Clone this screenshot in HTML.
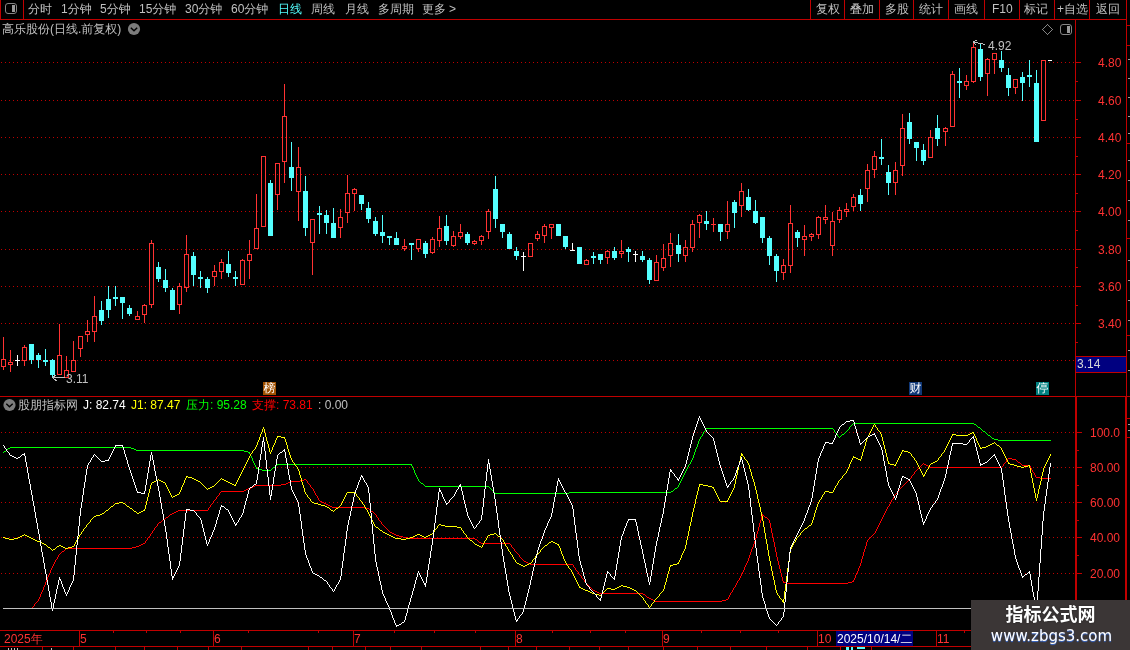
<!DOCTYPE html>
<html><head><meta charset="utf-8"><title>chart</title>
<style>
html,body{margin:0;padding:0;background:#000;}
#w{position:relative;width:1130px;height:650px;overflow:hidden;background:#000;font-family:"Liberation Sans","WenQuanYi Zen Hei",sans-serif;}
#t{position:absolute;left:0;top:0;width:1130px;height:650px;will-change:transform;}
#w span{position:absolute;white-space:nowrap;line-height:14px;font-size:12px;}
svg{position:absolute;left:0;top:0;}
</style></head><body><div id="w">
<svg width="1130" height="650" viewBox="0 0 1130 650" shape-rendering="crispEdges">
<line x1="1" y1="62.5" x2="1075" y2="62.5" stroke="#C00000" stroke-width="1" stroke-dasharray="1 3"/>
<line x1="1" y1="100.5" x2="1075" y2="100.5" stroke="#C00000" stroke-width="1" stroke-dasharray="1 3"/>
<line x1="1" y1="137.5" x2="1075" y2="137.5" stroke="#C00000" stroke-width="1" stroke-dasharray="1 3"/>
<line x1="1" y1="174.5" x2="1075" y2="174.5" stroke="#C00000" stroke-width="1" stroke-dasharray="1 3"/>
<line x1="1" y1="211.5" x2="1075" y2="211.5" stroke="#C00000" stroke-width="1" stroke-dasharray="1 3"/>
<line x1="1" y1="249.5" x2="1075" y2="249.5" stroke="#C00000" stroke-width="1" stroke-dasharray="1 3"/>
<line x1="1" y1="286.5" x2="1075" y2="286.5" stroke="#C00000" stroke-width="1" stroke-dasharray="1 3"/>
<line x1="1" y1="323.5" x2="1075" y2="323.5" stroke="#C00000" stroke-width="1" stroke-dasharray="1 3"/>
<line x1="1" y1="360.5" x2="1075" y2="360.5" stroke="#C00000" stroke-width="1" stroke-dasharray="1 3"/>
<line x1="1" y1="432.5" x2="1075" y2="432.5" stroke="#C00000" stroke-width="1" stroke-dasharray="1 3"/>
<line x1="1" y1="467.5" x2="1075" y2="467.5" stroke="#C00000" stroke-width="1" stroke-dasharray="1 3"/>
<line x1="1" y1="502.5" x2="1075" y2="502.5" stroke="#C00000" stroke-width="1" stroke-dasharray="1 3"/>
<line x1="1" y1="537.5" x2="1075" y2="537.5" stroke="#C00000" stroke-width="1" stroke-dasharray="1 3"/>
<line x1="1" y1="573.5" x2="1075" y2="573.5" stroke="#C00000" stroke-width="1" stroke-dasharray="1 3"/>
<rect x="0" y="19" width="1127" height="1" fill="#C00000"/>
<rect x="0" y="0" width="1" height="20" fill="#C00000"/>
<rect x="23" y="0" width="1" height="20" fill="#C00000"/>
<rect x="810" y="0" width="1" height="19" fill="#C00000"/>
<rect x="844" y="0" width="1" height="19" fill="#C00000"/>
<rect x="879" y="0" width="1" height="19" fill="#C00000"/>
<rect x="913" y="0" width="1" height="19" fill="#C00000"/>
<rect x="948" y="0" width="1" height="19" fill="#C00000"/>
<rect x="984" y="0" width="1" height="19" fill="#C00000"/>
<rect x="1019" y="0" width="1" height="19" fill="#C00000"/>
<rect x="1054" y="0" width="1" height="19" fill="#C00000"/>
<rect x="1089" y="0" width="1" height="19" fill="#C00000"/>
<rect x="1126" y="0" width="1" height="397" fill="#C00000"/>
<rect x="1125" y="397" width="2" height="253" fill="#C00000"/>
<rect x="1127" y="25" width="3" height="1" fill="#C00000"/>
<rect x="1127" y="45" width="3" height="1" fill="#C00000"/>
<rect x="1127" y="143" width="3" height="1" fill="#C00000"/>
<rect x="1127" y="238" width="3" height="1" fill="#C00000"/>
<rect x="1127" y="335" width="3" height="1" fill="#C00000"/>
<rect x="1127" y="418" width="3" height="1" fill="#C00000"/>
<rect x="1127" y="437" width="3" height="1" fill="#C00000"/>
<rect x="1075" y="20" width="1" height="377" fill="#C00000"/>
<rect x="1075" y="397" width="2" height="234" fill="#C00000"/>
<rect x="0" y="396" width="1130" height="1" fill="#C00000"/>
<rect x="0" y="630" width="1076" height="1" fill="#C00000"/>
<rect x="0" y="646" width="1076" height="1" fill="#C00000"/>
<rect x="1076" y="62" width="5" height="1" fill="#C00000"/>
<rect x="1076" y="100" width="5" height="1" fill="#C00000"/>
<rect x="1076" y="137" width="5" height="1" fill="#C00000"/>
<rect x="1076" y="174" width="5" height="1" fill="#C00000"/>
<rect x="1076" y="211" width="5" height="1" fill="#C00000"/>
<rect x="1076" y="249" width="5" height="1" fill="#C00000"/>
<rect x="1076" y="286" width="5" height="1" fill="#C00000"/>
<rect x="1076" y="323" width="5" height="1" fill="#C00000"/>
<rect x="1076" y="360" width="5" height="1" fill="#C00000"/>
<rect x="1076" y="81" width="2" height="1" fill="#C00000"/>
<rect x="1076" y="119" width="2" height="1" fill="#C00000"/>
<rect x="1076" y="156" width="2" height="1" fill="#C00000"/>
<rect x="1076" y="193" width="2" height="1" fill="#C00000"/>
<rect x="1076" y="230" width="2" height="1" fill="#C00000"/>
<rect x="1076" y="267" width="2" height="1" fill="#C00000"/>
<rect x="1076" y="305" width="2" height="1" fill="#C00000"/>
<rect x="1076" y="342" width="2" height="1" fill="#C00000"/>
<rect x="1077" y="432" width="5" height="1" fill="#C00000"/>
<rect x="1077" y="467" width="5" height="1" fill="#C00000"/>
<rect x="1077" y="502" width="5" height="1" fill="#C00000"/>
<rect x="1077" y="537" width="5" height="1" fill="#C00000"/>
<rect x="1077" y="573" width="5" height="1" fill="#C00000"/>
<rect x="1077" y="450" width="2" height="1" fill="#C00000"/>
<rect x="1077" y="485" width="2" height="1" fill="#C00000"/>
<rect x="1077" y="520" width="2" height="1" fill="#C00000"/>
<rect x="1077" y="555" width="2" height="1" fill="#C00000"/>
<rect x="79" y="630" width="1" height="17" fill="#C00000"/>
<rect x="213" y="630" width="1" height="17" fill="#C00000"/>
<rect x="353" y="630" width="1" height="17" fill="#C00000"/>
<rect x="515" y="630" width="1" height="17" fill="#C00000"/>
<rect x="662" y="630" width="1" height="17" fill="#C00000"/>
<rect x="817" y="630" width="1" height="17" fill="#C00000"/>
<rect x="936" y="630" width="1" height="17" fill="#C00000"/>
<rect x="113" y="630" width="1" height="3" fill="#C00000"/>
<rect x="146" y="630" width="1" height="3" fill="#C00000"/>
<rect x="180" y="630" width="1" height="3" fill="#C00000"/>
<rect x="248" y="630" width="1" height="3" fill="#C00000"/>
<rect x="318" y="630" width="1" height="3" fill="#C00000"/>
<rect x="394" y="630" width="1" height="3" fill="#C00000"/>
<rect x="434" y="630" width="1" height="3" fill="#C00000"/>
<rect x="475" y="630" width="1" height="3" fill="#C00000"/>
<rect x="552" y="630" width="1" height="3" fill="#C00000"/>
<rect x="590" y="630" width="1" height="3" fill="#C00000"/>
<rect x="625" y="630" width="1" height="3" fill="#C00000"/>
<rect x="701" y="630" width="1" height="3" fill="#C00000"/>
<rect x="740" y="630" width="1" height="3" fill="#C00000"/>
<rect x="778" y="630" width="1" height="3" fill="#C00000"/>
<rect x="964" y="630" width="1" height="3" fill="#C00000"/>
<rect x="42" y="647" width="1" height="3" fill="#C00000"/>
<rect x="73" y="647" width="1" height="3" fill="#C00000"/>
<rect x="115" y="647" width="1" height="3" fill="#C00000"/>
<rect x="144" y="647" width="1" height="3" fill="#C00000"/>
<rect x="177" y="647" width="1" height="3" fill="#C00000"/>
<rect x="208" y="647" width="1" height="3" fill="#C00000"/>
<rect x="241" y="647" width="1" height="3" fill="#C00000"/>
<rect x="308" y="647" width="1" height="3" fill="#C00000"/>
<rect x="332" y="647" width="1" height="3" fill="#C00000"/>
<rect x="365" y="647" width="1" height="3" fill="#C00000"/>
<rect x="390" y="647" width="1" height="3" fill="#C00000"/>
<rect x="421" y="647" width="1" height="3" fill="#C00000"/>
<rect x="480" y="647" width="1" height="3" fill="#C00000"/>
<rect x="508" y="647" width="1" height="3" fill="#C00000"/>
<rect x="536" y="647" width="1" height="3" fill="#C00000"/>
<rect x="569" y="647" width="1" height="3" fill="#C00000"/>
<rect x="599" y="647" width="1" height="3" fill="#C00000"/>
<rect x="628" y="647" width="1" height="3" fill="#C00000"/>
<rect x="663" y="647" width="1" height="3" fill="#C00000"/>
<rect x="697" y="647" width="1" height="3" fill="#C00000"/>
<rect x="730" y="647" width="1" height="3" fill="#C00000"/>
<rect x="766" y="647" width="1" height="3" fill="#C00000"/>
<rect x="807" y="647" width="1" height="3" fill="#C00000"/>
<rect x="840" y="647" width="1" height="3" fill="#C00000"/>
<rect x="871" y="647" width="1" height="3" fill="#C00000"/>
<rect x="1128" y="59" width="2" height="1" fill="#A0A0A0"/>
<rect x="1128" y="78" width="2" height="1" fill="#A0A0A0"/>
<rect x="1128" y="97" width="2" height="1" fill="#A0A0A0"/>
<rect x="1128" y="116" width="2" height="1" fill="#A0A0A0"/>
<rect x="1128" y="133" width="2" height="1" fill="#A0A0A0"/>
<rect x="1128" y="160" width="2" height="1" fill="#A0A0A0"/>
<rect x="1128" y="180" width="2" height="1" fill="#A0A0A0"/>
<rect x="1128" y="200" width="2" height="1" fill="#A0A0A0"/>
<rect x="1128" y="220" width="2" height="1" fill="#A0A0A0"/>
<rect x="1128" y="260" width="2" height="1" fill="#A0A0A0"/>
<rect x="1128" y="280" width="2" height="1" fill="#A0A0A0"/>
<rect x="1128" y="300" width="2" height="1" fill="#A0A0A0"/>
<rect x="1128" y="320" width="2" height="1" fill="#A0A0A0"/>
<rect x="1128" y="350" width="2" height="1" fill="#A0A0A0"/>
<rect x="1128" y="370" width="2" height="1" fill="#A0A0A0"/>
<rect x="1128" y="424" width="2" height="1" fill="#A0A0A0"/>
<rect x="1128" y="430" width="2" height="1" fill="#A0A0A0"/>
<rect x="8" y="648" width="1" height="2" fill="#C0C0C0"/>
<rect x="11" y="648" width="1" height="2" fill="#C0C0C0"/>
<rect x="14" y="648" width="1" height="2" fill="#C0C0C0"/>
<rect x="17" y="648" width="1" height="2" fill="#C0C0C0"/>
<rect x="51" y="648" width="1" height="2" fill="#C0C0C0"/>
<rect x="846" y="647" width="3" height="3" fill="#54FFFF"/>
<rect x="851" y="647" width="2" height="3" fill="#54FFFF"/>
<rect x="857" y="647" width="8" height="2" fill="#54FFFF"/>
<rect x="3" y="337" width="1" height="22" fill="#FF3232"/>
<rect x="3" y="367" width="1" height="3" fill="#FF3232"/>
<rect x="1" y="359" width="5" height="1" fill="#FF3232"/>
<rect x="1" y="366" width="5" height="1" fill="#FF3232"/>
<rect x="1" y="359" width="1" height="8" fill="#FF3232"/>
<rect x="5" y="359" width="1" height="8" fill="#FF3232"/>
<rect x="10" y="350" width="1" height="12" fill="#FF3232"/>
<rect x="10" y="365" width="1" height="7" fill="#FF3232"/>
<rect x="8" y="362" width="5" height="1" fill="#FF3232"/>
<rect x="8" y="364" width="5" height="1" fill="#FF3232"/>
<rect x="8" y="362" width="1" height="3" fill="#FF3232"/>
<rect x="12" y="362" width="1" height="3" fill="#FF3232"/>
<rect x="17" y="355" width="1" height="11" fill="#FFFFFF"/>
<rect x="15" y="360" width="5" height="1" fill="#FFFFFF"/>
<rect x="24" y="345" width="1" height="2" fill="#FF3232"/>
<rect x="24" y="361" width="1" height="5" fill="#FF3232"/>
<rect x="22" y="347" width="5" height="1" fill="#FF3232"/>
<rect x="22" y="360" width="5" height="1" fill="#FF3232"/>
<rect x="22" y="347" width="1" height="14" fill="#FF3232"/>
<rect x="26" y="347" width="1" height="14" fill="#FF3232"/>
<rect x="31" y="344" width="1" height="20" fill="#54FFFF"/>
<rect x="29" y="344" width="5" height="16" fill="#54FFFF"/>
<rect x="38" y="353" width="1" height="15" fill="#54FFFF"/>
<rect x="36" y="355" width="5" height="5" fill="#54FFFF"/>
<rect x="45" y="349" width="1" height="17" fill="#54FFFF"/>
<rect x="43" y="360" width="5" height="2" fill="#54FFFF"/>
<rect x="52" y="359" width="1" height="18" fill="#54FFFF"/>
<rect x="50" y="360" width="5" height="15" fill="#54FFFF"/>
<rect x="59" y="324" width="1" height="31" fill="#FF3232"/>
<rect x="57" y="355" width="5" height="1" fill="#FF3232"/>
<rect x="57" y="374" width="5" height="1" fill="#FF3232"/>
<rect x="57" y="355" width="1" height="20" fill="#FF3232"/>
<rect x="61" y="355" width="1" height="20" fill="#FF3232"/>
<rect x="66" y="356" width="1" height="14" fill="#FF3232"/>
<rect x="64" y="370" width="5" height="1" fill="#FF3232"/>
<rect x="64" y="377" width="5" height="1" fill="#FF3232"/>
<rect x="64" y="370" width="1" height="8" fill="#FF3232"/>
<rect x="68" y="370" width="1" height="8" fill="#FF3232"/>
<rect x="73" y="341" width="1" height="19" fill="#FF3232"/>
<rect x="71" y="360" width="5" height="1" fill="#FF3232"/>
<rect x="71" y="371" width="5" height="1" fill="#FF3232"/>
<rect x="71" y="360" width="1" height="12" fill="#FF3232"/>
<rect x="75" y="360" width="1" height="12" fill="#FF3232"/>
<rect x="80" y="349" width="1" height="8" fill="#FF3232"/>
<rect x="78" y="336" width="5" height="1" fill="#FF3232"/>
<rect x="78" y="348" width="5" height="1" fill="#FF3232"/>
<rect x="78" y="336" width="1" height="13" fill="#FF3232"/>
<rect x="82" y="336" width="1" height="13" fill="#FF3232"/>
<rect x="87" y="320" width="1" height="11" fill="#FF3232"/>
<rect x="87" y="335" width="1" height="7" fill="#FF3232"/>
<rect x="85" y="331" width="5" height="1" fill="#FF3232"/>
<rect x="85" y="334" width="5" height="1" fill="#FF3232"/>
<rect x="85" y="331" width="1" height="4" fill="#FF3232"/>
<rect x="89" y="331" width="1" height="4" fill="#FF3232"/>
<rect x="94" y="296" width="1" height="20" fill="#FF3232"/>
<rect x="94" y="332" width="1" height="10" fill="#FF3232"/>
<rect x="92" y="316" width="5" height="1" fill="#FF3232"/>
<rect x="92" y="331" width="5" height="1" fill="#FF3232"/>
<rect x="92" y="316" width="1" height="16" fill="#FF3232"/>
<rect x="96" y="316" width="1" height="16" fill="#FF3232"/>
<rect x="101" y="301" width="1" height="24" fill="#54FFFF"/>
<rect x="99" y="310" width="5" height="11" fill="#54FFFF"/>
<rect x="108" y="286" width="1" height="32" fill="#54FFFF"/>
<rect x="106" y="299" width="5" height="11" fill="#54FFFF"/>
<rect x="115" y="286" width="1" height="20" fill="#54FFFF"/>
<rect x="113" y="297" width="5" height="2" fill="#54FFFF"/>
<rect x="122" y="297" width="1" height="22" fill="#54FFFF"/>
<rect x="120" y="297" width="5" height="6" fill="#54FFFF"/>
<rect x="129" y="305" width="1" height="11" fill="#54FFFF"/>
<rect x="127" y="308" width="5" height="6" fill="#54FFFF"/>
<rect x="137" y="311" width="1" height="5" fill="#FF3232"/>
<rect x="135" y="316" width="5" height="1" fill="#FF3232"/>
<rect x="135" y="319" width="5" height="1" fill="#FF3232"/>
<rect x="135" y="316" width="1" height="4" fill="#FF3232"/>
<rect x="139" y="316" width="1" height="4" fill="#FF3232"/>
<rect x="144" y="304" width="1" height="1" fill="#FF3232"/>
<rect x="144" y="315" width="1" height="8" fill="#FF3232"/>
<rect x="142" y="305" width="5" height="1" fill="#FF3232"/>
<rect x="142" y="314" width="5" height="1" fill="#FF3232"/>
<rect x="142" y="305" width="1" height="10" fill="#FF3232"/>
<rect x="146" y="305" width="1" height="10" fill="#FF3232"/>
<rect x="151" y="240" width="1" height="3" fill="#FF3232"/>
<rect x="151" y="305" width="1" height="3" fill="#FF3232"/>
<rect x="149" y="243" width="5" height="1" fill="#FF3232"/>
<rect x="149" y="304" width="5" height="1" fill="#FF3232"/>
<rect x="149" y="243" width="1" height="62" fill="#FF3232"/>
<rect x="153" y="243" width="1" height="62" fill="#FF3232"/>
<rect x="158" y="262" width="1" height="20" fill="#54FFFF"/>
<rect x="156" y="267" width="5" height="12" fill="#54FFFF"/>
<rect x="165" y="269" width="1" height="23" fill="#54FFFF"/>
<rect x="163" y="280" width="5" height="8" fill="#54FFFF"/>
<rect x="172" y="288" width="1" height="22" fill="#54FFFF"/>
<rect x="170" y="290" width="5" height="20" fill="#54FFFF"/>
<rect x="179" y="283" width="1" height="3" fill="#FF3232"/>
<rect x="179" y="305" width="1" height="9" fill="#FF3232"/>
<rect x="177" y="286" width="5" height="1" fill="#FF3232"/>
<rect x="177" y="304" width="5" height="1" fill="#FF3232"/>
<rect x="177" y="286" width="1" height="19" fill="#FF3232"/>
<rect x="181" y="286" width="1" height="19" fill="#FF3232"/>
<rect x="186" y="235" width="1" height="19" fill="#FF3232"/>
<rect x="186" y="288" width="1" height="4" fill="#FF3232"/>
<rect x="184" y="254" width="5" height="1" fill="#FF3232"/>
<rect x="184" y="287" width="5" height="1" fill="#FF3232"/>
<rect x="184" y="254" width="1" height="34" fill="#FF3232"/>
<rect x="188" y="254" width="1" height="34" fill="#FF3232"/>
<rect x="193" y="252" width="1" height="34" fill="#54FFFF"/>
<rect x="191" y="256" width="5" height="19" fill="#54FFFF"/>
<rect x="200" y="271" width="1" height="17" fill="#54FFFF"/>
<rect x="198" y="277" width="5" height="2" fill="#54FFFF"/>
<rect x="207" y="277" width="1" height="16" fill="#54FFFF"/>
<rect x="205" y="279" width="5" height="9" fill="#54FFFF"/>
<rect x="214" y="265" width="1" height="6" fill="#FF3232"/>
<rect x="214" y="277" width="1" height="9" fill="#FF3232"/>
<rect x="212" y="271" width="5" height="1" fill="#FF3232"/>
<rect x="212" y="276" width="5" height="1" fill="#FF3232"/>
<rect x="212" y="271" width="1" height="6" fill="#FF3232"/>
<rect x="216" y="271" width="1" height="6" fill="#FF3232"/>
<rect x="221" y="259" width="1" height="3" fill="#FF3232"/>
<rect x="221" y="272" width="1" height="7" fill="#FF3232"/>
<rect x="219" y="262" width="5" height="1" fill="#FF3232"/>
<rect x="219" y="271" width="5" height="1" fill="#FF3232"/>
<rect x="219" y="262" width="1" height="10" fill="#FF3232"/>
<rect x="223" y="262" width="1" height="10" fill="#FF3232"/>
<rect x="228" y="251" width="1" height="26" fill="#54FFFF"/>
<rect x="226" y="264" width="5" height="9" fill="#54FFFF"/>
<rect x="235" y="271" width="1" height="15" fill="#54FFFF"/>
<rect x="233" y="277" width="5" height="2" fill="#54FFFF"/>
<rect x="242" y="259" width="1" height="1" fill="#FF3232"/>
<rect x="240" y="260" width="5" height="1" fill="#FF3232"/>
<rect x="240" y="284" width="5" height="1" fill="#FF3232"/>
<rect x="240" y="260" width="1" height="25" fill="#FF3232"/>
<rect x="244" y="260" width="1" height="25" fill="#FF3232"/>
<rect x="249" y="240" width="1" height="14" fill="#FF3232"/>
<rect x="249" y="261" width="1" height="18" fill="#FF3232"/>
<rect x="247" y="254" width="5" height="1" fill="#FF3232"/>
<rect x="247" y="260" width="5" height="1" fill="#FF3232"/>
<rect x="247" y="254" width="1" height="7" fill="#FF3232"/>
<rect x="251" y="254" width="1" height="7" fill="#FF3232"/>
<rect x="256" y="194" width="1" height="34" fill="#FF3232"/>
<rect x="254" y="228" width="5" height="1" fill="#FF3232"/>
<rect x="254" y="248" width="5" height="1" fill="#FF3232"/>
<rect x="254" y="228" width="1" height="21" fill="#FF3232"/>
<rect x="258" y="228" width="1" height="21" fill="#FF3232"/>
<rect x="261" y="156" width="5" height="1" fill="#FF3232"/>
<rect x="261" y="226" width="5" height="1" fill="#FF3232"/>
<rect x="261" y="156" width="1" height="71" fill="#FF3232"/>
<rect x="265" y="156" width="1" height="71" fill="#FF3232"/>
<rect x="270" y="180" width="1" height="56" fill="#54FFFF"/>
<rect x="268" y="183" width="5" height="53" fill="#54FFFF"/>
<rect x="277" y="195" width="1" height="15" fill="#FF3232"/>
<rect x="275" y="163" width="5" height="1" fill="#FF3232"/>
<rect x="275" y="194" width="5" height="1" fill="#FF3232"/>
<rect x="275" y="163" width="1" height="32" fill="#FF3232"/>
<rect x="279" y="163" width="1" height="32" fill="#FF3232"/>
<rect x="284" y="84" width="1" height="32" fill="#FF3232"/>
<rect x="284" y="162" width="1" height="21" fill="#FF3232"/>
<rect x="282" y="116" width="5" height="1" fill="#FF3232"/>
<rect x="282" y="161" width="5" height="1" fill="#FF3232"/>
<rect x="282" y="116" width="1" height="46" fill="#FF3232"/>
<rect x="286" y="116" width="1" height="46" fill="#FF3232"/>
<rect x="291" y="142" width="1" height="49" fill="#54FFFF"/>
<rect x="289" y="167" width="5" height="11" fill="#54FFFF"/>
<rect x="298" y="147" width="1" height="20" fill="#FF3232"/>
<rect x="298" y="192" width="1" height="29" fill="#FF3232"/>
<rect x="296" y="167" width="5" height="1" fill="#FF3232"/>
<rect x="296" y="191" width="5" height="1" fill="#FF3232"/>
<rect x="296" y="167" width="1" height="25" fill="#FF3232"/>
<rect x="300" y="167" width="1" height="25" fill="#FF3232"/>
<rect x="305" y="176" width="1" height="60" fill="#54FFFF"/>
<rect x="303" y="191" width="5" height="37" fill="#54FFFF"/>
<rect x="312" y="243" width="1" height="32" fill="#FF3232"/>
<rect x="310" y="219" width="5" height="1" fill="#FF3232"/>
<rect x="310" y="242" width="5" height="1" fill="#FF3232"/>
<rect x="310" y="219" width="1" height="24" fill="#FF3232"/>
<rect x="314" y="219" width="1" height="24" fill="#FF3232"/>
<rect x="319" y="206" width="1" height="28" fill="#54FFFF"/>
<rect x="317" y="213" width="5" height="2" fill="#54FFFF"/>
<rect x="326" y="210" width="1" height="24" fill="#54FFFF"/>
<rect x="324" y="215" width="5" height="8" fill="#54FFFF"/>
<rect x="333" y="208" width="1" height="30" fill="#54FFFF"/>
<rect x="331" y="223" width="5" height="15" fill="#54FFFF"/>
<rect x="340" y="209" width="1" height="8" fill="#FF3232"/>
<rect x="340" y="228" width="1" height="10" fill="#FF3232"/>
<rect x="338" y="217" width="5" height="1" fill="#FF3232"/>
<rect x="338" y="227" width="5" height="1" fill="#FF3232"/>
<rect x="338" y="217" width="1" height="11" fill="#FF3232"/>
<rect x="342" y="217" width="1" height="11" fill="#FF3232"/>
<rect x="347" y="175" width="1" height="18" fill="#FF3232"/>
<rect x="347" y="213" width="1" height="10" fill="#FF3232"/>
<rect x="345" y="193" width="5" height="1" fill="#FF3232"/>
<rect x="345" y="212" width="5" height="1" fill="#FF3232"/>
<rect x="345" y="193" width="1" height="20" fill="#FF3232"/>
<rect x="349" y="193" width="1" height="20" fill="#FF3232"/>
<rect x="354" y="188" width="1" height="1" fill="#FF3232"/>
<rect x="354" y="194" width="1" height="17" fill="#FF3232"/>
<rect x="352" y="189" width="5" height="1" fill="#FF3232"/>
<rect x="352" y="193" width="5" height="1" fill="#FF3232"/>
<rect x="352" y="189" width="1" height="5" fill="#FF3232"/>
<rect x="356" y="189" width="1" height="5" fill="#FF3232"/>
<rect x="361" y="195" width="1" height="15" fill="#54FFFF"/>
<rect x="359" y="195" width="5" height="9" fill="#54FFFF"/>
<rect x="368" y="202" width="1" height="21" fill="#54FFFF"/>
<rect x="366" y="208" width="5" height="11" fill="#54FFFF"/>
<rect x="375" y="217" width="1" height="19" fill="#54FFFF"/>
<rect x="373" y="221" width="5" height="13" fill="#54FFFF"/>
<rect x="382" y="215" width="1" height="28" fill="#54FFFF"/>
<rect x="380" y="232" width="5" height="4" fill="#54FFFF"/>
<rect x="389" y="236" width="1" height="9" fill="#54FFFF"/>
<rect x="387" y="236" width="5" height="2" fill="#54FFFF"/>
<rect x="396" y="232" width="1" height="13" fill="#54FFFF"/>
<rect x="394" y="238" width="5" height="7" fill="#54FFFF"/>
<rect x="404" y="239" width="1" height="7" fill="#FF3232"/>
<rect x="404" y="249" width="1" height="2" fill="#FF3232"/>
<rect x="402" y="246" width="5" height="1" fill="#FF3232"/>
<rect x="402" y="248" width="5" height="1" fill="#FF3232"/>
<rect x="402" y="246" width="1" height="3" fill="#FF3232"/>
<rect x="406" y="246" width="1" height="3" fill="#FF3232"/>
<rect x="411" y="243" width="1" height="17" fill="#54FFFF"/>
<rect x="409" y="243" width="5" height="2" fill="#54FFFF"/>
<rect x="418" y="249" width="1" height="3" fill="#FF3232"/>
<rect x="416" y="239" width="5" height="1" fill="#FF3232"/>
<rect x="416" y="248" width="5" height="1" fill="#FF3232"/>
<rect x="416" y="239" width="1" height="10" fill="#FF3232"/>
<rect x="420" y="239" width="1" height="10" fill="#FF3232"/>
<rect x="425" y="241" width="1" height="17" fill="#54FFFF"/>
<rect x="423" y="243" width="5" height="11" fill="#54FFFF"/>
<rect x="432" y="237" width="1" height="2" fill="#FF3232"/>
<rect x="432" y="253" width="1" height="1" fill="#FF3232"/>
<rect x="430" y="239" width="5" height="1" fill="#FF3232"/>
<rect x="430" y="252" width="5" height="1" fill="#FF3232"/>
<rect x="430" y="239" width="1" height="14" fill="#FF3232"/>
<rect x="434" y="239" width="1" height="14" fill="#FF3232"/>
<rect x="439" y="216" width="1" height="12" fill="#FF3232"/>
<rect x="439" y="241" width="1" height="6" fill="#FF3232"/>
<rect x="437" y="228" width="5" height="1" fill="#FF3232"/>
<rect x="437" y="240" width="5" height="1" fill="#FF3232"/>
<rect x="437" y="228" width="1" height="13" fill="#FF3232"/>
<rect x="441" y="228" width="1" height="13" fill="#FF3232"/>
<rect x="446" y="215" width="1" height="30" fill="#54FFFF"/>
<rect x="444" y="226" width="5" height="15" fill="#54FFFF"/>
<rect x="453" y="231" width="1" height="5" fill="#FF3232"/>
<rect x="453" y="246" width="1" height="1" fill="#FF3232"/>
<rect x="451" y="236" width="5" height="1" fill="#FF3232"/>
<rect x="451" y="245" width="5" height="1" fill="#FF3232"/>
<rect x="451" y="236" width="1" height="10" fill="#FF3232"/>
<rect x="455" y="236" width="1" height="10" fill="#FF3232"/>
<rect x="460" y="224" width="1" height="8" fill="#FF3232"/>
<rect x="460" y="237" width="1" height="2" fill="#FF3232"/>
<rect x="458" y="232" width="5" height="1" fill="#FF3232"/>
<rect x="458" y="236" width="5" height="1" fill="#FF3232"/>
<rect x="458" y="232" width="1" height="5" fill="#FF3232"/>
<rect x="462" y="232" width="1" height="5" fill="#FF3232"/>
<rect x="467" y="232" width="1" height="13" fill="#54FFFF"/>
<rect x="465" y="234" width="5" height="9" fill="#54FFFF"/>
<rect x="474" y="240" width="1" height="1" fill="#FF3232"/>
<rect x="474" y="244" width="1" height="1" fill="#FF3232"/>
<rect x="472" y="241" width="5" height="1" fill="#FF3232"/>
<rect x="472" y="243" width="5" height="1" fill="#FF3232"/>
<rect x="472" y="241" width="1" height="3" fill="#FF3232"/>
<rect x="476" y="241" width="1" height="3" fill="#FF3232"/>
<rect x="481" y="235" width="1" height="1" fill="#FF3232"/>
<rect x="481" y="241" width="1" height="4" fill="#FF3232"/>
<rect x="479" y="236" width="5" height="1" fill="#FF3232"/>
<rect x="479" y="240" width="5" height="1" fill="#FF3232"/>
<rect x="479" y="236" width="1" height="5" fill="#FF3232"/>
<rect x="483" y="236" width="1" height="5" fill="#FF3232"/>
<rect x="488" y="209" width="1" height="2" fill="#FF3232"/>
<rect x="488" y="232" width="1" height="7" fill="#FF3232"/>
<rect x="486" y="211" width="5" height="1" fill="#FF3232"/>
<rect x="486" y="231" width="5" height="1" fill="#FF3232"/>
<rect x="486" y="211" width="1" height="21" fill="#FF3232"/>
<rect x="490" y="211" width="1" height="21" fill="#FF3232"/>
<rect x="495" y="176" width="1" height="52" fill="#54FFFF"/>
<rect x="493" y="189" width="5" height="30" fill="#54FFFF"/>
<rect x="502" y="224" width="1" height="14" fill="#54FFFF"/>
<rect x="500" y="224" width="5" height="8" fill="#54FFFF"/>
<rect x="509" y="232" width="1" height="17" fill="#54FFFF"/>
<rect x="507" y="234" width="5" height="15" fill="#54FFFF"/>
<rect x="516" y="247" width="1" height="13" fill="#54FFFF"/>
<rect x="514" y="251" width="5" height="5" fill="#54FFFF"/>
<rect x="523" y="252" width="1" height="19" fill="#FFFFFF"/>
<rect x="521" y="256" width="5" height="1" fill="#FFFFFF"/>
<rect x="528" y="243" width="5" height="1" fill="#FF3232"/>
<rect x="528" y="256" width="5" height="1" fill="#FF3232"/>
<rect x="528" y="243" width="1" height="14" fill="#FF3232"/>
<rect x="532" y="243" width="1" height="14" fill="#FF3232"/>
<rect x="537" y="231" width="1" height="3" fill="#FF3232"/>
<rect x="537" y="239" width="1" height="2" fill="#FF3232"/>
<rect x="535" y="234" width="5" height="1" fill="#FF3232"/>
<rect x="535" y="238" width="5" height="1" fill="#FF3232"/>
<rect x="535" y="234" width="1" height="5" fill="#FF3232"/>
<rect x="539" y="234" width="1" height="5" fill="#FF3232"/>
<rect x="544" y="224" width="1" height="2" fill="#FF3232"/>
<rect x="544" y="236" width="1" height="7" fill="#FF3232"/>
<rect x="542" y="226" width="5" height="1" fill="#FF3232"/>
<rect x="542" y="235" width="5" height="1" fill="#FF3232"/>
<rect x="542" y="226" width="1" height="10" fill="#FF3232"/>
<rect x="546" y="226" width="1" height="10" fill="#FF3232"/>
<rect x="551" y="228" width="1" height="11" fill="#FF3232"/>
<rect x="549" y="224" width="5" height="1" fill="#FF3232"/>
<rect x="549" y="227" width="5" height="1" fill="#FF3232"/>
<rect x="549" y="224" width="1" height="4" fill="#FF3232"/>
<rect x="553" y="224" width="1" height="4" fill="#FF3232"/>
<rect x="558" y="224" width="1" height="12" fill="#54FFFF"/>
<rect x="556" y="224" width="5" height="12" fill="#54FFFF"/>
<rect x="565" y="236" width="1" height="13" fill="#54FFFF"/>
<rect x="563" y="236" width="5" height="11" fill="#54FFFF"/>
<rect x="572" y="243" width="1" height="8" fill="#FFFFFF"/>
<rect x="570" y="250" width="5" height="1" fill="#FFFFFF"/>
<rect x="579" y="247" width="1" height="17" fill="#54FFFF"/>
<rect x="577" y="247" width="5" height="17" fill="#54FFFF"/>
<rect x="586" y="259" width="1" height="1" fill="#FF3232"/>
<rect x="584" y="260" width="5" height="1" fill="#FF3232"/>
<rect x="584" y="264" width="5" height="1" fill="#FF3232"/>
<rect x="584" y="260" width="1" height="5" fill="#FF3232"/>
<rect x="588" y="260" width="1" height="5" fill="#FF3232"/>
<rect x="593" y="252" width="1" height="12" fill="#54FFFF"/>
<rect x="591" y="256" width="5" height="2" fill="#54FFFF"/>
<rect x="600" y="254" width="1" height="10" fill="#54FFFF"/>
<rect x="598" y="254" width="5" height="6" fill="#54FFFF"/>
<rect x="607" y="250" width="1" height="1" fill="#FF3232"/>
<rect x="607" y="258" width="1" height="6" fill="#FF3232"/>
<rect x="605" y="251" width="5" height="1" fill="#FF3232"/>
<rect x="605" y="257" width="5" height="1" fill="#FF3232"/>
<rect x="605" y="251" width="1" height="7" fill="#FF3232"/>
<rect x="609" y="251" width="1" height="7" fill="#FF3232"/>
<rect x="614" y="247" width="1" height="13" fill="#54FFFF"/>
<rect x="612" y="251" width="5" height="7" fill="#54FFFF"/>
<rect x="621" y="240" width="1" height="11" fill="#FF3232"/>
<rect x="621" y="254" width="1" height="4" fill="#FF3232"/>
<rect x="619" y="251" width="5" height="1" fill="#FF3232"/>
<rect x="619" y="253" width="5" height="1" fill="#FF3232"/>
<rect x="619" y="251" width="1" height="3" fill="#FF3232"/>
<rect x="623" y="251" width="1" height="3" fill="#FF3232"/>
<rect x="628" y="247" width="1" height="15" fill="#54FFFF"/>
<rect x="626" y="249" width="5" height="3" fill="#54FFFF"/>
<rect x="635" y="251" width="1" height="11" fill="#FFFFFF"/>
<rect x="633" y="254" width="5" height="1" fill="#FFFFFF"/>
<rect x="642" y="251" width="1" height="11" fill="#54FFFF"/>
<rect x="640" y="256" width="5" height="4" fill="#54FFFF"/>
<rect x="649" y="258" width="1" height="26" fill="#54FFFF"/>
<rect x="647" y="260" width="5" height="20" fill="#54FFFF"/>
<rect x="656" y="255" width="1" height="7" fill="#FF3232"/>
<rect x="654" y="262" width="5" height="1" fill="#FF3232"/>
<rect x="654" y="280" width="5" height="1" fill="#FF3232"/>
<rect x="654" y="262" width="1" height="19" fill="#FF3232"/>
<rect x="658" y="262" width="1" height="19" fill="#FF3232"/>
<rect x="663" y="244" width="1" height="14" fill="#FF3232"/>
<rect x="663" y="268" width="1" height="3" fill="#FF3232"/>
<rect x="661" y="258" width="5" height="1" fill="#FF3232"/>
<rect x="661" y="267" width="5" height="1" fill="#FF3232"/>
<rect x="661" y="258" width="1" height="10" fill="#FF3232"/>
<rect x="665" y="258" width="1" height="10" fill="#FF3232"/>
<rect x="670" y="233" width="1" height="10" fill="#FF3232"/>
<rect x="670" y="256" width="1" height="11" fill="#FF3232"/>
<rect x="668" y="243" width="5" height="1" fill="#FF3232"/>
<rect x="668" y="255" width="5" height="1" fill="#FF3232"/>
<rect x="668" y="243" width="1" height="13" fill="#FF3232"/>
<rect x="672" y="243" width="1" height="13" fill="#FF3232"/>
<rect x="678" y="234" width="1" height="28" fill="#54FFFF"/>
<rect x="676" y="245" width="5" height="9" fill="#54FFFF"/>
<rect x="685" y="240" width="1" height="7" fill="#FF3232"/>
<rect x="685" y="256" width="1" height="6" fill="#FF3232"/>
<rect x="683" y="247" width="5" height="1" fill="#FF3232"/>
<rect x="683" y="255" width="5" height="1" fill="#FF3232"/>
<rect x="683" y="247" width="1" height="9" fill="#FF3232"/>
<rect x="687" y="247" width="1" height="9" fill="#FF3232"/>
<rect x="692" y="220" width="1" height="4" fill="#FF3232"/>
<rect x="692" y="248" width="1" height="4" fill="#FF3232"/>
<rect x="690" y="224" width="5" height="1" fill="#FF3232"/>
<rect x="690" y="247" width="5" height="1" fill="#FF3232"/>
<rect x="690" y="224" width="1" height="24" fill="#FF3232"/>
<rect x="694" y="224" width="1" height="24" fill="#FF3232"/>
<rect x="699" y="214" width="1" height="1" fill="#FF3232"/>
<rect x="699" y="223" width="1" height="15" fill="#FF3232"/>
<rect x="697" y="215" width="5" height="1" fill="#FF3232"/>
<rect x="697" y="222" width="5" height="1" fill="#FF3232"/>
<rect x="697" y="215" width="1" height="8" fill="#FF3232"/>
<rect x="701" y="215" width="1" height="8" fill="#FF3232"/>
<rect x="706" y="211" width="1" height="19" fill="#54FFFF"/>
<rect x="704" y="221" width="5" height="3" fill="#54FFFF"/>
<rect x="713" y="218" width="1" height="14" fill="#FF3232"/>
<rect x="711" y="224" width="5" height="1" fill="#FF3232"/>
<rect x="720" y="224" width="1" height="17" fill="#54FFFF"/>
<rect x="718" y="224" width="5" height="8" fill="#54FFFF"/>
<rect x="727" y="201" width="1" height="23" fill="#FF3232"/>
<rect x="727" y="232" width="1" height="7" fill="#FF3232"/>
<rect x="725" y="224" width="5" height="1" fill="#FF3232"/>
<rect x="725" y="231" width="5" height="1" fill="#FF3232"/>
<rect x="725" y="224" width="1" height="8" fill="#FF3232"/>
<rect x="729" y="224" width="1" height="8" fill="#FF3232"/>
<rect x="734" y="200" width="1" height="28" fill="#54FFFF"/>
<rect x="732" y="202" width="5" height="11" fill="#54FFFF"/>
<rect x="741" y="183" width="1" height="8" fill="#FF3232"/>
<rect x="741" y="206" width="1" height="11" fill="#FF3232"/>
<rect x="739" y="191" width="5" height="1" fill="#FF3232"/>
<rect x="739" y="205" width="5" height="1" fill="#FF3232"/>
<rect x="739" y="191" width="1" height="15" fill="#FF3232"/>
<rect x="743" y="191" width="1" height="15" fill="#FF3232"/>
<rect x="748" y="189" width="1" height="22" fill="#54FFFF"/>
<rect x="746" y="197" width="5" height="13" fill="#54FFFF"/>
<rect x="755" y="200" width="1" height="24" fill="#54FFFF"/>
<rect x="753" y="211" width="5" height="12" fill="#54FFFF"/>
<rect x="762" y="217" width="1" height="26" fill="#54FFFF"/>
<rect x="760" y="217" width="5" height="21" fill="#54FFFF"/>
<rect x="769" y="236" width="1" height="29" fill="#54FFFF"/>
<rect x="767" y="238" width="5" height="18" fill="#54FFFF"/>
<rect x="776" y="254" width="1" height="28" fill="#54FFFF"/>
<rect x="774" y="256" width="5" height="15" fill="#54FFFF"/>
<rect x="783" y="259" width="1" height="6" fill="#FF3232"/>
<rect x="783" y="273" width="1" height="7" fill="#FF3232"/>
<rect x="781" y="265" width="5" height="1" fill="#FF3232"/>
<rect x="781" y="272" width="5" height="1" fill="#FF3232"/>
<rect x="781" y="265" width="1" height="8" fill="#FF3232"/>
<rect x="785" y="265" width="1" height="8" fill="#FF3232"/>
<rect x="790" y="205" width="1" height="18" fill="#FF3232"/>
<rect x="790" y="266" width="1" height="7" fill="#FF3232"/>
<rect x="788" y="223" width="5" height="1" fill="#FF3232"/>
<rect x="788" y="265" width="5" height="1" fill="#FF3232"/>
<rect x="788" y="223" width="1" height="43" fill="#FF3232"/>
<rect x="792" y="223" width="1" height="43" fill="#FF3232"/>
<rect x="797" y="230" width="1" height="17" fill="#54FFFF"/>
<rect x="795" y="232" width="5" height="6" fill="#54FFFF"/>
<rect x="804" y="225" width="1" height="11" fill="#FF3232"/>
<rect x="804" y="240" width="1" height="16" fill="#FF3232"/>
<rect x="802" y="236" width="5" height="1" fill="#FF3232"/>
<rect x="802" y="239" width="5" height="1" fill="#FF3232"/>
<rect x="802" y="236" width="1" height="4" fill="#FF3232"/>
<rect x="806" y="236" width="1" height="4" fill="#FF3232"/>
<rect x="811" y="233" width="1" height="1" fill="#FF3232"/>
<rect x="811" y="237" width="1" height="4" fill="#FF3232"/>
<rect x="809" y="234" width="5" height="1" fill="#FF3232"/>
<rect x="809" y="236" width="5" height="1" fill="#FF3232"/>
<rect x="809" y="234" width="1" height="3" fill="#FF3232"/>
<rect x="813" y="234" width="1" height="3" fill="#FF3232"/>
<rect x="818" y="216" width="1" height="1" fill="#FF3232"/>
<rect x="818" y="235" width="1" height="4" fill="#FF3232"/>
<rect x="816" y="217" width="5" height="1" fill="#FF3232"/>
<rect x="816" y="234" width="5" height="1" fill="#FF3232"/>
<rect x="816" y="217" width="1" height="18" fill="#FF3232"/>
<rect x="820" y="217" width="1" height="18" fill="#FF3232"/>
<rect x="825" y="205" width="1" height="12" fill="#FF3232"/>
<rect x="825" y="220" width="1" height="4" fill="#FF3232"/>
<rect x="823" y="217" width="5" height="1" fill="#FF3232"/>
<rect x="823" y="219" width="5" height="1" fill="#FF3232"/>
<rect x="823" y="217" width="1" height="3" fill="#FF3232"/>
<rect x="827" y="217" width="1" height="3" fill="#FF3232"/>
<rect x="832" y="212" width="1" height="9" fill="#FF3232"/>
<rect x="832" y="246" width="1" height="10" fill="#FF3232"/>
<rect x="830" y="221" width="5" height="1" fill="#FF3232"/>
<rect x="830" y="245" width="5" height="1" fill="#FF3232"/>
<rect x="830" y="221" width="1" height="25" fill="#FF3232"/>
<rect x="834" y="221" width="1" height="25" fill="#FF3232"/>
<rect x="839" y="207" width="1" height="3" fill="#FF3232"/>
<rect x="839" y="220" width="1" height="3" fill="#FF3232"/>
<rect x="837" y="210" width="5" height="1" fill="#FF3232"/>
<rect x="837" y="219" width="5" height="1" fill="#FF3232"/>
<rect x="837" y="210" width="1" height="10" fill="#FF3232"/>
<rect x="841" y="210" width="1" height="10" fill="#FF3232"/>
<rect x="846" y="203" width="1" height="6" fill="#FF3232"/>
<rect x="846" y="212" width="1" height="5" fill="#FF3232"/>
<rect x="844" y="209" width="5" height="1" fill="#FF3232"/>
<rect x="844" y="211" width="5" height="1" fill="#FF3232"/>
<rect x="844" y="209" width="1" height="3" fill="#FF3232"/>
<rect x="848" y="209" width="1" height="3" fill="#FF3232"/>
<rect x="853" y="194" width="1" height="3" fill="#FF3232"/>
<rect x="853" y="207" width="1" height="4" fill="#FF3232"/>
<rect x="851" y="197" width="5" height="1" fill="#FF3232"/>
<rect x="851" y="206" width="5" height="1" fill="#FF3232"/>
<rect x="851" y="197" width="1" height="10" fill="#FF3232"/>
<rect x="855" y="197" width="1" height="10" fill="#FF3232"/>
<rect x="860" y="189" width="1" height="22" fill="#54FFFF"/>
<rect x="858" y="195" width="5" height="9" fill="#54FFFF"/>
<rect x="867" y="164" width="1" height="6" fill="#FF3232"/>
<rect x="867" y="189" width="1" height="13" fill="#FF3232"/>
<rect x="865" y="170" width="5" height="1" fill="#FF3232"/>
<rect x="865" y="188" width="5" height="1" fill="#FF3232"/>
<rect x="865" y="170" width="1" height="19" fill="#FF3232"/>
<rect x="869" y="170" width="1" height="19" fill="#FF3232"/>
<rect x="874" y="151" width="1" height="5" fill="#FF3232"/>
<rect x="874" y="170" width="1" height="8" fill="#FF3232"/>
<rect x="872" y="156" width="5" height="1" fill="#FF3232"/>
<rect x="872" y="169" width="5" height="1" fill="#FF3232"/>
<rect x="872" y="156" width="1" height="14" fill="#FF3232"/>
<rect x="876" y="156" width="1" height="14" fill="#FF3232"/>
<rect x="881" y="139" width="1" height="26" fill="#54FFFF"/>
<rect x="879" y="157" width="5" height="2" fill="#54FFFF"/>
<rect x="888" y="165" width="1" height="30" fill="#54FFFF"/>
<rect x="886" y="172" width="5" height="11" fill="#54FFFF"/>
<rect x="895" y="162" width="1" height="8" fill="#FF3232"/>
<rect x="895" y="183" width="1" height="12" fill="#FF3232"/>
<rect x="893" y="170" width="5" height="1" fill="#FF3232"/>
<rect x="893" y="182" width="5" height="1" fill="#FF3232"/>
<rect x="893" y="170" width="1" height="13" fill="#FF3232"/>
<rect x="897" y="170" width="1" height="13" fill="#FF3232"/>
<rect x="902" y="114" width="1" height="14" fill="#FF3232"/>
<rect x="902" y="166" width="1" height="10" fill="#FF3232"/>
<rect x="900" y="128" width="5" height="1" fill="#FF3232"/>
<rect x="900" y="165" width="5" height="1" fill="#FF3232"/>
<rect x="900" y="128" width="1" height="38" fill="#FF3232"/>
<rect x="904" y="128" width="1" height="38" fill="#FF3232"/>
<rect x="909" y="113" width="1" height="31" fill="#54FFFF"/>
<rect x="907" y="122" width="5" height="17" fill="#54FFFF"/>
<rect x="916" y="142" width="1" height="19" fill="#54FFFF"/>
<rect x="914" y="142" width="5" height="6" fill="#54FFFF"/>
<rect x="923" y="144" width="1" height="21" fill="#54FFFF"/>
<rect x="921" y="150" width="5" height="11" fill="#54FFFF"/>
<rect x="930" y="130" width="1" height="7" fill="#FF3232"/>
<rect x="928" y="137" width="5" height="1" fill="#FF3232"/>
<rect x="928" y="157" width="5" height="1" fill="#FF3232"/>
<rect x="928" y="137" width="1" height="21" fill="#FF3232"/>
<rect x="932" y="137" width="1" height="21" fill="#FF3232"/>
<rect x="937" y="115" width="1" height="31" fill="#54FFFF"/>
<rect x="935" y="128" width="5" height="11" fill="#54FFFF"/>
<rect x="945" y="127" width="1" height="1" fill="#FF3232"/>
<rect x="945" y="132" width="1" height="14" fill="#FF3232"/>
<rect x="943" y="128" width="5" height="1" fill="#FF3232"/>
<rect x="943" y="131" width="5" height="1" fill="#FF3232"/>
<rect x="943" y="128" width="1" height="4" fill="#FF3232"/>
<rect x="947" y="128" width="1" height="4" fill="#FF3232"/>
<rect x="952" y="71" width="1" height="3" fill="#FF3232"/>
<rect x="950" y="74" width="5" height="1" fill="#FF3232"/>
<rect x="950" y="126" width="5" height="1" fill="#FF3232"/>
<rect x="950" y="74" width="1" height="53" fill="#FF3232"/>
<rect x="954" y="74" width="1" height="53" fill="#FF3232"/>
<rect x="959" y="68" width="1" height="30" fill="#54FFFF"/>
<rect x="957" y="81" width="5" height="2" fill="#54FFFF"/>
<rect x="966" y="75" width="1" height="6" fill="#FF3232"/>
<rect x="966" y="86" width="1" height="4" fill="#FF3232"/>
<rect x="964" y="81" width="5" height="1" fill="#FF3232"/>
<rect x="964" y="85" width="5" height="1" fill="#FF3232"/>
<rect x="964" y="81" width="1" height="5" fill="#FF3232"/>
<rect x="968" y="81" width="1" height="5" fill="#FF3232"/>
<rect x="973" y="43" width="1" height="4" fill="#FF3232"/>
<rect x="973" y="82" width="1" height="1" fill="#FF3232"/>
<rect x="971" y="47" width="5" height="1" fill="#FF3232"/>
<rect x="971" y="81" width="5" height="1" fill="#FF3232"/>
<rect x="971" y="47" width="1" height="35" fill="#FF3232"/>
<rect x="975" y="47" width="1" height="35" fill="#FF3232"/>
<rect x="980" y="43" width="1" height="38" fill="#54FFFF"/>
<rect x="978" y="49" width="5" height="28" fill="#54FFFF"/>
<rect x="987" y="58" width="1" height="1" fill="#FF3232"/>
<rect x="987" y="74" width="1" height="22" fill="#FF3232"/>
<rect x="985" y="59" width="5" height="1" fill="#FF3232"/>
<rect x="985" y="73" width="5" height="1" fill="#FF3232"/>
<rect x="985" y="59" width="1" height="15" fill="#FF3232"/>
<rect x="989" y="59" width="1" height="15" fill="#FF3232"/>
<rect x="994" y="60" width="1" height="14" fill="#FF3232"/>
<rect x="992" y="53" width="5" height="1" fill="#FF3232"/>
<rect x="992" y="59" width="5" height="1" fill="#FF3232"/>
<rect x="992" y="53" width="1" height="7" fill="#FF3232"/>
<rect x="996" y="53" width="1" height="7" fill="#FF3232"/>
<rect x="1001" y="51" width="1" height="21" fill="#54FFFF"/>
<rect x="999" y="60" width="5" height="8" fill="#54FFFF"/>
<rect x="1008" y="68" width="1" height="28" fill="#54FFFF"/>
<rect x="1006" y="75" width="5" height="13" fill="#54FFFF"/>
<rect x="1015" y="88" width="1" height="6" fill="#FF3232"/>
<rect x="1013" y="79" width="5" height="1" fill="#FF3232"/>
<rect x="1013" y="87" width="5" height="1" fill="#FF3232"/>
<rect x="1013" y="79" width="1" height="9" fill="#FF3232"/>
<rect x="1017" y="79" width="1" height="9" fill="#FF3232"/>
<rect x="1022" y="72" width="1" height="29" fill="#54FFFF"/>
<rect x="1020" y="77" width="5" height="6" fill="#54FFFF"/>
<rect x="1029" y="60" width="1" height="27" fill="#54FFFF"/>
<rect x="1027" y="75" width="5" height="2" fill="#54FFFF"/>
<rect x="1036" y="70" width="1" height="72" fill="#54FFFF"/>
<rect x="1034" y="83" width="5" height="59" fill="#54FFFF"/>
<rect x="1041" y="60" width="5" height="1" fill="#FF3232"/>
<rect x="1041" y="120" width="5" height="1" fill="#FF3232"/>
<rect x="1041" y="60" width="1" height="61" fill="#FF3232"/>
<rect x="1045" y="60" width="1" height="61" fill="#FF3232"/>
<rect x="1048" y="60" width="4" height="1" fill="#FFFFFF"/>
<rect x="1076" y="357" width="50" height="16" fill="#000080"/>
<rect x="1076" y="356" width="50" height="1" fill="#C00000"/>
<rect x="1076" y="372" width="50" height="1" fill="#C00000"/>
<path d="M34.5 604v2M38.5 599v2M39.5 597v2M40.5 594v3M41.5 592v2M42.5 590v2M43.5 587v3M44.5 585v2M45.5 582v3M46.5 580v2M47.5 577v3M48.5 575v2M49.5 573v2M50.5 570v3M51.5 568v2M52.5 566v2M53.5 564v2M54.5 562v2M55.5 560v2M57.5 557v2M58.5 555v2M145.5 541v2M147.5 538v2M150.5 534v2M152.5 531v2M154.5 528v2M157.5 524v2M208.5 508v2M210.5 505v2M213.5 501v2M216.5 497v2M219.5 493v2M307.5 481v2M310.5 485v2M313.5 489v2M314.5 491v2M315.5 493v2M317.5 496v2M318.5 498v2M376.5 515v2M378.5 518v2M381.5 522v2M511.5 545v2M514.5 549v2M519.5 555v2M573.5 565v2M575.5 568v2M578.5 572v2M581.5 576v2M584.5 580v2M728.5 597v2M729.5 595v2M730.5 593v2M732.5 590v2M733.5 588v2M735.5 585v2M736.5 583v2M737.5 581v2M739.5 578v2M740.5 576v2M741.5 574v2M742.5 572v2M743.5 570v2M744.5 567v3M745.5 565v2M746.5 563v2M747.5 561v2M748.5 558v3M749.5 555v3M750.5 552v3M751.5 549v3M752.5 547v2M753.5 544v3M754.5 541v3M755.5 538v3M756.5 534v4M757.5 531v3M758.5 527v4M759.5 523v4M760.5 520v3M761.5 516v4M762.5 514v2M769.5 520v3M770.5 523v5M771.5 528v5M772.5 533v5M773.5 538v4M774.5 542v5M775.5 547v5M776.5 552v5M777.5 557v4M778.5 561v4M779.5 565v4M780.5 569v4M781.5 573v4M782.5 577v4M783.5 581v2M853.5 580v2M854.5 578v2M855.5 575v3M856.5 573v2M857.5 571v2M858.5 568v3M859.5 566v2M860.5 563v3M861.5 559v4M862.5 556v3M863.5 552v4M864.5 549v3M865.5 546v3M866.5 542v4M867.5 540v2M875.5 531v2M876.5 529v2M877.5 527v2M878.5 525v2M879.5 523v2M880.5 521v2M881.5 519v2M882.5 517v2M883.5 515v2M884.5 513v2M885.5 511v2M886.5 509v2M887.5 507v2M889.5 504v2M890.5 502v2M891.5 500v2M893.5 497v2M894.5 495v2M898.5 490v2M911.5 476v2M914.5 472v2M1003.5 464v2M1006.5 460v2M1030.5 466v2M1031.5 468v2M1032.5 470v2M1034.5 473v2M1035.5 475v2M1008 458.5h4M1007 459.5h1M1012 459.5h4M1016 460.5h1M1017 461.5h1M1005 462.5h1M1018 462.5h2M923 463.5h1M1004 463.5h1M1020 463.5h1M922 464.5h1M924 464.5h2M1021 464.5h1M921 465.5h1M926 465.5h2M1022 465.5h8M920 466.5h1M928 466.5h2M1002 466.5h1M919 467.5h1M930 467.5h72M918 468.5h1M917 469.5h1M916 470.5h1M915 471.5h1M1033 472.5h1M913 474.5h1M912 475.5h1M1036 477.5h4M910 478.5h1M1040 478.5h11M304 479.5h2M909 479.5h1M300 480.5h4M306 480.5h1M908 480.5h1M290 481.5h10M907 481.5h1M288 482.5h2M906 482.5h1M286 483.5h2M308 483.5h1M905 483.5h1M281 484.5h5M309 484.5h1M904 484.5h1M255 485.5h26M903 485.5h1M253 486.5h2M902 486.5h1M251 487.5h2M311 487.5h1M901 487.5h1M248 488.5h3M312 488.5h1M900 488.5h1M246 489.5h2M899 489.5h1M244 490.5h2M221 491.5h23M220 492.5h1M897 492.5h1M896 493.5h1M895 494.5h1M218 495.5h1M316 495.5h1M217 496.5h1M215 499.5h1M892 499.5h1M214 500.5h1M319 500.5h1M320 501.5h2M322 502.5h2M212 503.5h1M324 503.5h2M211 504.5h1M326 504.5h2M328 505.5h2M330 506.5h2M888 506.5h1M209 507.5h1M332 507.5h33M365 508.5h4M369 509.5h1M178 510.5h30M370 510.5h1M176 511.5h2M371 511.5h2M174 512.5h2M373 512.5h1M172 513.5h2M374 513.5h1M170 514.5h2M375 514.5h1M169 515.5h1M763 515.5h1M168 516.5h1M764 516.5h1M166 517.5h2M377 517.5h1M765 517.5h2M165 518.5h1M767 518.5h1M163 519.5h2M768 519.5h1M162 520.5h1M379 520.5h1M161 521.5h1M380 521.5h1M159 522.5h2M158 523.5h1M382 524.5h1M383 525.5h1M156 526.5h1M384 526.5h1M155 527.5h1M385 527.5h1M386 528.5h1M387 529.5h1M153 530.5h1M388 530.5h1M389 531.5h1M390 532.5h2M151 533.5h1M392 533.5h2M874 533.5h1M394 534.5h2M873 534.5h1M396 535.5h3M872 535.5h1M149 536.5h1M399 536.5h4M871 536.5h1M148 537.5h1M403 537.5h5M870 537.5h1M408 538.5h67M869 538.5h1M475 539.5h2M868 539.5h1M146 540.5h1M477 540.5h1M478 541.5h1M479 542.5h2M143 543.5h2M481 543.5h29M141 544.5h2M510 544.5h1M139 545.5h2M136 546.5h3M132 547.5h4M512 547.5h1M66 548.5h66M513 548.5h1M65 549.5h1M64 550.5h1M62 551.5h2M515 551.5h1M61 552.5h1M516 552.5h1M60 553.5h1M517 553.5h1M59 554.5h1M518 554.5h1M520 557.5h1M521 558.5h1M56 559.5h1M522 559.5h1M523 560.5h1M524 561.5h2M526 562.5h2M528 563.5h2M530 564.5h43M574 567.5h1M576 570.5h1M577 571.5h1M579 574.5h1M580 575.5h1M582 578.5h1M583 579.5h1M738 580.5h1M852 581.5h1M585 582.5h1M784 582.5h3M848 582.5h4M586 583.5h1M787 583.5h61M587 584.5h1M588 585.5h1M589 586.5h1M590 587.5h1M734 587.5h1M591 588.5h1M592 589.5h1M593 590.5h2M595 591.5h2M597 592.5h2M731 592.5h1M599 593.5h44M643 594.5h2M645 595.5h1M646 596.5h1M647 597.5h2M649 598.5h2M651 599.5h2M726 599.5h2M653 600.5h2M722 600.5h4M37 601.5h1M655 601.5h67M36 602.5h1M35 603.5h1M33 606.5h1M32 607.5h1M31 608.5h1" fill="none" stroke="#FF0000" stroke-width="1"/>
<path d="M249.5 452v2M250.5 454v2M251.5 456v2M252.5 458v3M253.5 461v2M254.5 463v2M255.5 465v2M256.5 467v2M411.5 464v2M412.5 466v2M413.5 468v2M414.5 470v3M415.5 473v2M416.5 475v2M417.5 477v2M418.5 479v2M678.5 485v2M679.5 483v2M680.5 481v2M681.5 479v2M682.5 477v2M683.5 475v2M684.5 473v2M685.5 471v2M686.5 469v2M687.5 467v2M688.5 465v2M690.5 462v2M691.5 460v2M692.5 458v2M693.5 455v3M694.5 452v3M695.5 449v3M696.5 447v2M697.5 444v3M698.5 441v3M699.5 439v2M700.5 437v2M702.5 434v2M703.5 432v2M705.5 429v2M834.5 430v2M837.5 434v2M849.5 427v2M853 423.5h121M852 424.5h1M974 424.5h2M851 425.5h1M976 425.5h1M850 426.5h1M977 426.5h1M978 427.5h2M706 428.5h127M980 428.5h1M833 429.5h1M848 429.5h1M981 429.5h1M847 430.5h1M982 430.5h1M704 431.5h1M846 431.5h1M983 431.5h2M835 432.5h1M845 432.5h1M985 432.5h1M836 433.5h1M844 433.5h1M986 433.5h1M842 434.5h2M987 434.5h1M841 435.5h1M988 435.5h2M701 436.5h1M838 436.5h1M840 436.5h1M990 436.5h1M839 437.5h1M991 437.5h1M992 438.5h2M994 439.5h4M998 440.5h53M10 447.5h121M8 448.5h2M131 448.5h3M7 449.5h1M134 449.5h2M6 450.5h1M136 450.5h108M4 451.5h2M244 451.5h4M3 452.5h1M248 452.5h1M277 464.5h134M689 464.5h1M276 465.5h1M275 466.5h1M273 467.5h2M257 468.5h1M272 468.5h1M258 469.5h4M271 469.5h1M262 470.5h9M419 481.5h1M420 482.5h1M421 483.5h2M423 484.5h1M424 485.5h1M425 486.5h64M489 487.5h1M677 487.5h1M490 488.5h1M675 488.5h2M491 489.5h1M674 489.5h1M492 490.5h1M673 490.5h1M493 491.5h1M671 491.5h2M494 492.5h1M569 492.5h102M495 493.5h74" fill="none" stroke="#00FF00" stroke-width="1"/>
<path d="M74.5 544v2M75.5 542v2M76.5 540v2M78.5 537v2M79.5 535v2M81.5 532v2M83.5 529v2M86.5 525v2M90.5 520v2M144.5 509v2M145.5 505v4M146.5 501v4M147.5 497v4M148.5 493v4M149.5 489v4M150.5 485v4M151.5 483v2M165.5 483v2M166.5 485v2M167.5 487v2M168.5 489v2M169.5 491v2M170.5 493v2M171.5 495v2M179.5 492v2M180.5 490v2M181.5 487v3M182.5 485v2M183.5 483v2M184.5 480v3M185.5 478v2M186.5 476v2M235.5 484v2M236.5 482v2M237.5 480v2M238.5 478v2M239.5 476v2M240.5 474v2M241.5 472v2M242.5 470v2M243.5 468v2M244.5 466v2M245.5 464v2M246.5 462v2M247.5 460v2M248.5 458v2M249.5 456v2M250.5 454v2M252.5 451v2M255.5 447v2M256.5 445v2M257.5 442v3M258.5 440v2M259.5 437v3M260.5 434v3M261.5 432v2M262.5 429v3M263.5 427v2M264.5 429v4M265.5 433v4M266.5 437v4M267.5 441v3M268.5 444v4M269.5 448v4M270.5 452v2M271.5 450v2M272.5 447v3M273.5 445v2M274.5 443v2M275.5 440v3M276.5 438v2M277.5 436v2M284.5 437v2M285.5 439v3M286.5 442v3M287.5 445v4M288.5 449v3M289.5 452v3M290.5 455v3M291.5 458v2M292.5 460v2M294.5 463v2M297.5 467v2M298.5 469v2M299.5 471v4M300.5 475v3M301.5 478v4M302.5 482v3M303.5 485v3M304.5 488v4M305.5 492v2M307.5 495v2M310.5 499v2M341.5 503v2M342.5 501v2M343.5 499v2M344.5 497v2M345.5 495v2M346.5 493v2M356.5 494v2M359.5 498v2M362.5 502v2M364.5 505v2M365.5 507v2M367.5 510v2M368.5 512v2M369.5 514v2M370.5 516v2M371.5 518v2M372.5 520v2M373.5 522v2M374.5 524v2M434.5 530v2M437.5 526v2M461.5 528v2M463.5 531v2M466.5 535v2M482.5 545v2M483.5 543v2M484.5 541v2M486.5 538v2M487.5 536v2M503.5 540v2M504.5 542v2M505.5 544v2M507.5 547v2M508.5 549v2M510.5 552v2M512.5 555v2M513.5 557v2M515.5 560v2M532.5 560v2M535.5 556v2M540.5 550v2M558.5 544v2M559.5 546v2M560.5 548v3M561.5 551v3M562.5 554v2M563.5 556v3M564.5 559v2M565.5 561v2M566.5 563v2M568.5 566v2M571.5 570v2M572.5 572v2M573.5 574v2M574.5 576v2M575.5 578v2M576.5 580v2M577.5 582v2M578.5 584v2M579.5 586v2M643.5 598v2M645.5 601v2M648.5 605v2M651.5 604v2M654.5 600v2M659.5 594v2M663.5 589v2M664.5 585v4M665.5 582v3M666.5 578v4M667.5 574v4M668.5 571v3M669.5 567v4M670.5 565v2M678.5 562v2M679.5 560v2M680.5 558v2M681.5 555v3M682.5 553v2M683.5 551v2M684.5 549v2M685.5 545v4M686.5 540v5M687.5 536v4M688.5 531v5M689.5 526v5M690.5 522v4M691.5 517v5M692.5 512v5M693.5 508v4M694.5 504v4M695.5 499v5M696.5 495v4M697.5 491v4M698.5 487v4M699.5 484v3M713.5 487v2M714.5 489v2M715.5 491v2M716.5 493v2M717.5 495v2M718.5 497v2M719.5 499v2M727.5 500v2M728.5 498v2M729.5 496v2M730.5 494v2M731.5 492v2M732.5 490v2M733.5 488v2M734.5 484v4M735.5 479v5M736.5 475v4M737.5 470v5M738.5 465v5M739.5 461v4M740.5 456v5M741.5 453v3M742.5 454v2M744.5 457v2M747.5 461v2M748.5 463v2M749.5 465v4M750.5 469v3M751.5 472v4M752.5 476v3M753.5 479v3M754.5 482v4M755.5 486v4M756.5 490v4M757.5 494v5M758.5 499v4M759.5 503v4M760.5 507v5M761.5 512v4M762.5 516v5M763.5 521v6M764.5 527v6M765.5 533v6M766.5 539v5M767.5 544v6M768.5 550v6M769.5 556v5M770.5 561v5M771.5 566v5M772.5 571v5M773.5 576v4M774.5 580v5M775.5 585v5M776.5 590v3M777.5 593v2M779.5 596v2M782.5 600v2M783.5 599v4M784.5 591v8M785.5 584v7M786.5 576v8M787.5 568v8M788.5 561v7M789.5 553v8M790.5 549v4M791.5 547v2M792.5 545v2M793.5 543v2M795.5 540v2M796.5 538v2M800.5 533v2M811.5 523v2M812.5 520v3M813.5 517v3M814.5 513v4M815.5 510v3M816.5 507v3M817.5 504v3M818.5 502v2M819.5 500v2M821.5 497v2M822.5 495v2M824.5 492v2M833.5 490v2M834.5 488v2M835.5 486v2M837.5 483v2M838.5 481v2M842.5 476v2M846.5 471v2M847.5 469v2M848.5 467v2M849.5 464v3M850.5 462v2M851.5 460v2M852.5 458v2M853.5 456v2M860.5 459v2M861.5 456v3M862.5 452v4M863.5 449v3M864.5 446v3M865.5 442v4M866.5 439v3M867.5 437v2M868.5 435v2M869.5 433v2M870.5 431v2M871.5 429v2M872.5 427v2M873.5 425v2M875.5 425v2M877.5 428v2M880.5 432v2M881.5 434v3M882.5 437v4M883.5 441v4M884.5 445v4M885.5 449v4M886.5 453v4M887.5 457v4M888.5 461v3M895.5 464v2M896.5 462v2M897.5 460v2M898.5 458v2M899.5 456v2M900.5 454v2M901.5 452v2M902.5 450v2M911.5 454v2M914.5 458v2M916.5 461v2M917.5 463v2M918.5 465v2M919.5 467v2M920.5 469v2M921.5 471v2M922.5 473v2M923.5 475v2M924.5 474v2M925.5 472v2M926.5 470v2M928.5 467v2M929.5 465v2M938.5 458v2M941.5 454v2M944.5 450v2M945.5 448v2M946.5 446v2M947.5 444v2M948.5 442v2M949.5 440v2M950.5 438v2M951.5 436v2M952.5 434v2M973.5 432v2M974.5 434v2M975.5 436v2M976.5 438v3M977.5 441v2M978.5 443v2M979.5 445v2M980.5 447v2M1001.5 448v2M1002.5 450v2M1003.5 452v2M1004.5 454v2M1005.5 456v2M1006.5 458v2M1007.5 460v2M1008.5 462v2M1029.5 465v3M1030.5 468v5M1031.5 473v5M1032.5 478v5M1033.5 483v5M1034.5 488v5M1035.5 493v5M1036.5 498v3M1037.5 494v4M1038.5 489v5M1039.5 485v4M1040.5 481v4M1041.5 476v5M1042.5 472v4M1043.5 468v4M1044.5 466v2M1045.5 464v2M1046.5 462v2M1047.5 460v2M1048.5 458v2M1049.5 456v2M1050.5 454v2M874 424.5h1M876 427.5h1M878 430.5h1M879 431.5h1M972 432.5h1M970 433.5h2M953 434.5h3M968 434.5h2M956 435.5h12M278 436.5h3M281 437.5h3M994 442.5h1M992 443.5h2M995 443.5h1M990 444.5h2M996 444.5h1M988 445.5h2M997 445.5h2M986 446.5h2M999 446.5h1M982 447.5h4M1000 447.5h1M981 448.5h1M254 449.5h1M253 450.5h1M903 450.5h1M904 451.5h4M908 452.5h2M943 452.5h1M251 453.5h1M910 453.5h1M942 453.5h1M743 456.5h1M912 456.5h1M940 456.5h1M854 457.5h2M913 457.5h1M939 457.5h1M856 458.5h2M745 459.5h1M858 459.5h2M746 460.5h1M915 460.5h1M937 460.5h1M935 461.5h2M293 462.5h1M933 462.5h2M889 463.5h1M931 463.5h2M1009 463.5h1M890 464.5h4M930 464.5h1M1010 464.5h4M295 465.5h1M894 465.5h1M1014 465.5h3M1028 465.5h1M296 466.5h1M1017 466.5h4M1024 466.5h4M1021 467.5h3M927 469.5h1M845 473.5h1M844 474.5h1M843 475.5h1M187 476.5h1M188 477.5h4M192 478.5h2M221 478.5h1M841 478.5h1M158 479.5h1M194 479.5h2M220 479.5h1M222 479.5h2M840 479.5h1M156 480.5h2M159 480.5h2M196 480.5h2M219 480.5h1M224 480.5h2M839 480.5h1M154 481.5h2M161 481.5h2M198 481.5h2M218 481.5h1M226 481.5h2M152 482.5h2M163 482.5h2M200 482.5h1M217 482.5h1M228 482.5h2M201 483.5h1M216 483.5h1M230 483.5h2M202 484.5h1M215 484.5h1M232 484.5h2M700 484.5h3M203 485.5h1M214 485.5h1M234 485.5h1M703 485.5h5M836 485.5h1M204 486.5h1M212 486.5h2M708 486.5h4M205 487.5h1M210 487.5h2M712 487.5h1M206 488.5h1M208 488.5h2M207 489.5h1M825 491.5h4M347 492.5h8M829 492.5h4M355 493.5h1M177 494.5h2M306 494.5h1M823 494.5h1M175 495.5h2M173 496.5h2M357 496.5h1M172 497.5h1M308 497.5h1M358 497.5h1M309 498.5h1M820 499.5h1M360 500.5h1M311 501.5h1M361 501.5h1M720 501.5h7M119 502.5h4M312 502.5h2M115 503.5h4M123 503.5h2M314 503.5h4M114 504.5h1M125 504.5h1M318 504.5h3M363 504.5h1M113 505.5h1M126 505.5h1M321 505.5h4M340 505.5h1M111 506.5h2M127 506.5h2M325 506.5h2M339 506.5h1M110 507.5h1M129 507.5h1M327 507.5h2M338 507.5h1M109 508.5h1M130 508.5h2M329 508.5h1M336 508.5h2M108 509.5h1M132 509.5h1M330 509.5h1M335 509.5h1M366 509.5h1M106 510.5h2M133 510.5h1M143 510.5h1M331 510.5h2M334 510.5h1M105 511.5h1M134 511.5h2M141 511.5h2M333 511.5h1M104 512.5h1M136 512.5h1M139 512.5h2M102 513.5h2M137 513.5h2M100 514.5h2M96 515.5h4M94 516.5h2M93 517.5h1M92 518.5h1M91 519.5h1M89 522.5h1M88 523.5h1M87 524.5h1M439 524.5h2M438 525.5h1M441 525.5h4M809 525.5h2M375 526.5h1M445 526.5h12M808 526.5h1M85 527.5h1M376 527.5h2M457 527.5h4M807 527.5h1M84 528.5h1M378 528.5h1M436 528.5h1M805 528.5h2M379 529.5h1M435 529.5h1M804 529.5h1M380 530.5h2M462 530.5h1M803 530.5h1M82 531.5h1M382 531.5h1M802 531.5h1M383 532.5h2M433 532.5h1M801 532.5h1M385 533.5h2M432 533.5h1M464 533.5h1M494 533.5h2M24 534.5h1M80 534.5h1M387 534.5h2M417 534.5h3M430 534.5h2M465 534.5h1M490 534.5h4M496 534.5h1M22 535.5h2M25 535.5h2M389 535.5h2M415 535.5h2M420 535.5h2M428 535.5h2M488 535.5h2M497 535.5h1M799 535.5h1M20 536.5h2M27 536.5h2M391 536.5h2M413 536.5h2M422 536.5h2M426 536.5h2M498 536.5h2M798 536.5h1M3 537.5h2M18 537.5h2M29 537.5h2M393 537.5h2M410 537.5h3M424 537.5h2M467 537.5h1M500 537.5h1M797 537.5h1M5 538.5h4M14 538.5h4M31 538.5h2M395 538.5h6M406 538.5h4M468 538.5h1M501 538.5h1M9 539.5h5M33 539.5h2M77 539.5h1M401 539.5h5M469 539.5h1M502 539.5h1M35 540.5h2M470 540.5h2M485 540.5h1M37 541.5h3M472 541.5h1M551 541.5h2M40 542.5h2M473 542.5h1M549 542.5h2M553 542.5h2M794 542.5h1M42 543.5h2M474 543.5h1M548 543.5h1M555 543.5h2M44 544.5h2M475 544.5h2M547 544.5h1M557 544.5h1M46 545.5h1M59 545.5h2M477 545.5h2M545 545.5h2M47 546.5h1M57 546.5h2M61 546.5h2M72 546.5h2M479 546.5h2M506 546.5h1M544 546.5h1M48 547.5h2M56 547.5h1M63 547.5h2M68 547.5h4M481 547.5h1M543 547.5h1M50 548.5h1M55 548.5h1M65 548.5h3M542 548.5h1M51 549.5h1M53 549.5h2M541 549.5h1M52 550.5h1M509 551.5h1M539 552.5h1M538 553.5h1M511 554.5h1M537 554.5h1M536 555.5h1M534 558.5h1M514 559.5h1M533 559.5h1M516 562.5h1M531 562.5h1M517 563.5h2M529 563.5h2M677 563.5h1M519 564.5h2M527 564.5h2M673 564.5h4M521 565.5h2M525 565.5h2M567 565.5h1M671 565.5h2M523 566.5h2M569 568.5h1M570 569.5h1M621 585.5h2M619 586.5h2M623 586.5h4M580 587.5h1M617 587.5h2M627 587.5h3M581 588.5h2M607 588.5h4M615 588.5h2M630 588.5h2M583 589.5h2M606 589.5h1M611 589.5h4M632 589.5h2M585 590.5h3M605 590.5h1M634 590.5h2M588 591.5h2M604 591.5h1M636 591.5h1M662 591.5h1M590 592.5h2M603 592.5h1M637 592.5h1M661 592.5h1M592 593.5h3M602 593.5h1M638 593.5h1M660 593.5h1M595 594.5h4M601 594.5h1M639 594.5h1M599 595.5h2M640 595.5h1M778 595.5h1M641 596.5h1M658 596.5h1M642 597.5h1M657 597.5h1M656 598.5h1M780 598.5h1M655 599.5h1M781 599.5h1M644 600.5h1M653 602.5h1M646 603.5h1M652 603.5h1M647 604.5h1M650 606.5h1M649 607.5h1" fill="none" stroke="#FFFF00" stroke-width="1"/>
<path d="M4.5 446v2M6.5 449v2M9.5 453v2M24.5 453v3M25.5 456v6M26.5 462v5M27.5 467v6M28.5 473v6M29.5 479v5M30.5 484v6M31.5 490v5M32.5 495v6M33.5 501v5M34.5 506v6M35.5 512v6M36.5 518v5M37.5 523v6M38.5 529v5M39.5 534v6M40.5 540v6M41.5 546v6M42.5 552v5M43.5 557v6M44.5 563v6M45.5 569v5M46.5 574v6M47.5 580v5M48.5 585v6M49.5 591v6M50.5 597v5M51.5 602v6M52.5 608v3M53.5 603v5M54.5 599v4M55.5 594v5M56.5 589v5M57.5 585v4M58.5 580v5M59.5 577v3M60.5 579v2M61.5 581v3M62.5 584v3M63.5 587v2M64.5 589v3M65.5 592v2M66.5 594v2M67.5 592v2M68.5 590v2M69.5 587v3M70.5 585v2M71.5 583v2M72.5 581v2M73.5 575v6M74.5 565v10M75.5 555v10M76.5 545v10M77.5 536v9M78.5 526v10M79.5 516v10M80.5 508v8M81.5 502v6M82.5 495v7M83.5 488v7M84.5 482v6M85.5 475v7M86.5 469v6M87.5 465v4M88.5 463v2M90.5 460v2M91.5 458v2M93.5 455v2M108.5 459v2M109.5 457v2M110.5 455v2M111.5 453v2M112.5 451v2M113.5 449v2M114.5 447v2M115.5 445v2M122.5 445v2M123.5 447v3M124.5 450v4M125.5 454v3M126.5 457v3M127.5 460v4M128.5 464v3M129.5 467v3M130.5 470v3M131.5 473v3M132.5 476v3M133.5 479v3M134.5 482v3M135.5 485v3M136.5 488v3M137.5 491v2M144.5 491v3M145.5 485v6M146.5 479v6M147.5 473v6M148.5 467v6M149.5 461v6M150.5 455v6M151.5 452v3M152.5 455v5M153.5 460v5M154.5 465v6M155.5 471v5M156.5 476v5M157.5 481v5M158.5 486v5M159.5 491v6M160.5 497v6M161.5 503v6M162.5 509v5M163.5 514v6M164.5 520v6M165.5 526v6M166.5 532v7M167.5 539v8M168.5 547v7M169.5 554v7M170.5 561v8M171.5 569v7M172.5 576v4M173.5 576v2M174.5 574v2M175.5 572v2M176.5 570v2M177.5 568v2M178.5 566v2M179.5 561v5M180.5 553v8M181.5 545v8M182.5 537v8M183.5 529v8M184.5 521v8M185.5 513v8M186.5 509v4M196.5 513v2M200.5 518v2M201.5 520v4M202.5 524v4M203.5 528v4M204.5 532v4M205.5 536v4M206.5 540v4M207.5 544v2M208.5 542v2M209.5 539v3M210.5 537v2M211.5 535v2M212.5 532v3M213.5 530v2M214.5 527v3M215.5 524v3M216.5 520v4M217.5 517v3M218.5 514v3M219.5 510v4M220.5 507v3M221.5 505v2M228.5 510v2M229.5 512v2M230.5 514v2M231.5 516v2M232.5 518v2M233.5 520v2M234.5 522v2M235.5 524v2M236.5 523v2M238.5 520v2M239.5 518v2M241.5 515v2M242.5 513v2M243.5 509v4M244.5 505v4M245.5 501v4M246.5 498v3M247.5 494v4M248.5 490v4M249.5 488v2M256.5 480v4M257.5 474v6M258.5 467v7M259.5 460v7M260.5 454v6M261.5 447v7M262.5 441v6M263.5 437v5M264.5 442v9M265.5 451v9M266.5 460v9M267.5 469v8M268.5 477v9M269.5 486v9M270.5 495v5M271.5 490v6M272.5 484v6M273.5 477v7M274.5 471v6M275.5 465v6M276.5 459v6M277.5 455v4M284.5 449v3M285.5 452v6M286.5 458v5M287.5 463v6M288.5 469v6M289.5 475v5M290.5 480v6M291.5 486v4M292.5 490v2M293.5 492v2M294.5 494v2M295.5 496v2M296.5 498v2M297.5 500v2M298.5 502v5M299.5 507v7M300.5 514v7M301.5 521v8M302.5 529v7M303.5 536v7M304.5 543v7M305.5 550v5M306.5 555v3M307.5 558v2M308.5 560v3M309.5 563v3M310.5 566v2M311.5 568v3M312.5 571v2M327.5 582v2M329.5 585v2M332.5 589v2M334.5 589v2M335.5 587v2M336.5 585v2M338.5 582v2M339.5 580v2M340.5 576v4M341.5 568v8M342.5 561v7M343.5 553v8M344.5 546v7M345.5 539v7M346.5 531v8M347.5 525v6M348.5 520v5M349.5 516v4M350.5 511v5M351.5 506v5M352.5 502v4M353.5 497v5M354.5 493v4M355.5 490v3M356.5 488v2M357.5 485v3M358.5 482v3M359.5 480v2M360.5 477v3M361.5 475v2M362.5 476v2M363.5 478v2M364.5 480v2M366.5 483v2M367.5 485v2M368.5 487v6M369.5 493v10M370.5 503v10M371.5 513v11M372.5 524v10M373.5 534v10M374.5 544v10M375.5 554v8M376.5 562v5M377.5 567v4M378.5 571v5M379.5 576v5M380.5 581v4M381.5 585v5M382.5 590v4M383.5 594v2M384.5 596v2M385.5 598v3M386.5 601v2M387.5 603v2M388.5 605v2M389.5 607v3M390.5 610v2M391.5 612v3M392.5 615v3M393.5 618v2M394.5 620v3M395.5 623v2M396.5 625v2M404.5 620v2M405.5 616v4M406.5 613v3M407.5 609v4M408.5 605v4M409.5 602v3M410.5 598v4M411.5 595v3M412.5 591v4M413.5 588v3M414.5 584v4M415.5 580v4M416.5 577v3M417.5 573v4M418.5 571v2M419.5 573v2M420.5 575v2M421.5 577v2M422.5 579v2M423.5 581v2M424.5 583v2M425.5 583v4M426.5 577v6M427.5 570v7M428.5 564v6M429.5 558v6M430.5 551v7M431.5 545v6M432.5 538v7M433.5 530v8M434.5 523v7M435.5 515v8M436.5 507v8M437.5 500v7M438.5 492v8M439.5 488v4M440.5 490v2M441.5 492v2M442.5 494v3M443.5 497v2M444.5 499v2M445.5 501v2M446.5 503v2M449.5 500v2M454.5 494v2M455.5 492v2M456.5 490v2M458.5 487v2M459.5 485v2M460.5 484v3M461.5 487v4M462.5 491v4M463.5 495v5M464.5 500v4M465.5 504v4M466.5 508v4M467.5 512v4M468.5 516v2M469.5 518v2M470.5 520v2M471.5 522v2M472.5 524v2M473.5 526v2M476.5 525v2M479.5 521v2M481.5 515v5M482.5 507v8M483.5 498v9M484.5 489v9M485.5 481v8M486.5 472v9M487.5 464v8M488.5 459v5M489.5 463v6M490.5 469v6M491.5 475v6M492.5 481v6M493.5 487v6M494.5 493v6M495.5 499v7M496.5 506v7M497.5 513v7M498.5 520v8M499.5 528v7M500.5 535v7M501.5 542v7M502.5 549v7M503.5 556v6M504.5 562v6M505.5 568v6M506.5 574v6M507.5 580v6M508.5 586v6M509.5 592v4M510.5 596v4M511.5 600v4M512.5 604v4M513.5 608v4M514.5 612v4M515.5 616v4M516.5 620v2M517.5 619v2M519.5 616v2M522.5 612v2M523.5 609v3M524.5 605v4M525.5 601v4M526.5 597v4M527.5 593v4M528.5 589v4M529.5 585v4M530.5 580v5M531.5 576v4M532.5 571v5M533.5 567v4M534.5 563v4M535.5 558v5M536.5 554v4M537.5 550v4M538.5 547v3M539.5 544v3M540.5 541v3M541.5 539v2M542.5 536v3M543.5 533v3M544.5 530v3M545.5 528v2M546.5 526v2M547.5 523v3M548.5 521v2M549.5 519v2M550.5 517v2M551.5 513v4M552.5 508v5M553.5 502v6M554.5 497v5M555.5 492v5M556.5 486v6M557.5 481v5M558.5 478v3M559.5 480v2M560.5 482v2M561.5 484v2M562.5 486v2M563.5 488v2M564.5 490v2M566.5 493v2M567.5 495v2M568.5 497v2M569.5 499v2M570.5 501v2M571.5 503v2M572.5 505v4M573.5 509v8M574.5 517v8M575.5 525v8M576.5 533v7M577.5 540v8M578.5 548v8M579.5 556v5M580.5 561v4M581.5 565v3M582.5 568v4M583.5 572v4M584.5 576v3M585.5 579v4M586.5 583v2M589.5 587v2M596.5 595v2M600.5 598v3M601.5 594v4M602.5 590v4M603.5 586v4M604.5 582v4M605.5 578v4M606.5 574v4M607.5 571v3M610.5 574v2M614.5 576v4M615.5 570v6M616.5 564v6M617.5 558v6M618.5 552v6M619.5 546v6M620.5 540v6M621.5 536v4M622.5 534v2M623.5 531v3M624.5 528v3M625.5 526v2M626.5 523v3M627.5 521v2M628.5 519v2M635.5 519v3M636.5 522v4M637.5 526v5M638.5 531v5M639.5 536v4M640.5 540v5M641.5 545v4M642.5 549v5M643.5 554v5M644.5 559v4M645.5 563v5M646.5 568v5M647.5 573v4M648.5 577v5M649.5 582v3M650.5 576v6M651.5 570v6M652.5 564v6M653.5 558v6M654.5 552v6M655.5 546v6M656.5 541v5M657.5 537v4M658.5 532v5M659.5 527v5M660.5 523v4M661.5 518v5M662.5 514v4M663.5 508v6M664.5 502v6M665.5 496v6M666.5 490v6M667.5 484v6M668.5 478v6M669.5 472v6M670.5 469v3M671.5 470v2M674.5 474v2M677.5 478v2M678.5 479v2M679.5 477v2M680.5 475v2M681.5 473v2M682.5 471v2M683.5 469v2M684.5 467v2M685.5 464v3M686.5 460v4M687.5 456v4M688.5 452v4M689.5 448v4M690.5 444v4M691.5 440v4M692.5 436v4M693.5 433v3M694.5 430v3M695.5 427v3M696.5 424v3M697.5 421v3M698.5 418v3M699.5 416v2M700.5 418v2M701.5 420v2M702.5 422v2M703.5 424v2M704.5 426v2M705.5 428v2M706.5 430v2M713.5 438v3M714.5 441v4M715.5 445v4M716.5 449v4M717.5 453v4M718.5 457v4M719.5 461v4M720.5 465v3M721.5 468v3M722.5 471v3M723.5 474v3M724.5 477v3M725.5 480v3M726.5 483v3M727.5 486v2M728.5 485v2M730.5 482v2M733.5 478v2M734.5 476v2M735.5 473v3M736.5 470v3M737.5 467v3M738.5 465v2M739.5 462v3M740.5 459v3M741.5 457v3M742.5 460v4M743.5 464v4M744.5 468v4M745.5 472v4M746.5 476v4M747.5 480v4M748.5 484v6M749.5 490v8M750.5 498v9M751.5 507v8M752.5 515v8M753.5 523v9M754.5 532v8M755.5 540v8M756.5 548v8M757.5 556v7M758.5 563v8M759.5 571v7M760.5 578v7M761.5 585v8M762.5 593v5M763.5 598v3M764.5 601v3M765.5 604v4M766.5 608v3M767.5 611v3M768.5 614v3M769.5 617v2M778.5 622v2M781.5 618v2M783.5 612v5M784.5 602v10M785.5 592v10M786.5 582v10M787.5 572v10M788.5 562v10M789.5 552v10M790.5 547v5M791.5 545v2M792.5 543v2M793.5 541v2M794.5 539v2M795.5 537v2M796.5 535v2M797.5 533v2M798.5 531v2M799.5 529v2M800.5 527v2M801.5 525v2M802.5 523v2M803.5 521v2M804.5 518v3M805.5 515v3M806.5 513v2M807.5 510v3M808.5 507v3M809.5 505v2M810.5 502v3M811.5 498v4M812.5 492v6M813.5 486v6M814.5 480v6M815.5 474v6M816.5 468v6M817.5 462v6M818.5 458v4M819.5 456v2M820.5 453v3M821.5 451v2M822.5 449v2M823.5 446v3M824.5 444v2M825.5 442v2M832.5 442v2M833.5 440v2M834.5 438v2M835.5 435v3M836.5 433v2M837.5 431v2M838.5 429v2M839.5 427v2M853.5 420v2M854.5 422v4M855.5 426v3M856.5 429v4M857.5 433v3M858.5 436v3M859.5 439v4M860.5 443v2M874.5 433v2M875.5 435v2M876.5 437v2M877.5 439v2M878.5 441v2M879.5 443v2M880.5 445v2M881.5 447v3M882.5 450v5M883.5 455v6M884.5 461v5M885.5 466v5M886.5 471v6M887.5 477v5M888.5 482v4M889.5 486v2M890.5 488v2M891.5 490v2M892.5 492v2M893.5 494v2M894.5 496v2M895.5 498v2M896.5 495v3M897.5 491v4M898.5 488v3M899.5 485v3M900.5 481v4M901.5 478v3M902.5 476v2M909.5 479v2M910.5 481v2M911.5 483v2M912.5 485v2M913.5 487v2M914.5 489v2M915.5 491v2M916.5 493v4M917.5 497v4M918.5 501v4M919.5 505v5M920.5 510v4M921.5 514v4M922.5 518v4M923.5 522v3M924.5 521v2M925.5 519v2M926.5 516v3M927.5 514v2M928.5 512v2M929.5 510v2M930.5 508v2M932.5 505v2M935.5 501v2M937.5 498v2M938.5 495v3M939.5 492v3M940.5 489v3M941.5 487v2M942.5 484v3M943.5 481v3M944.5 478v3M945.5 474v4M946.5 469v5M947.5 465v4M948.5 460v5M949.5 455v5M950.5 451v4M951.5 446v5M952.5 443v3M969.5 440v2M973.5 436v3M974.5 439v4M975.5 443v4M976.5 447v4M977.5 451v4M978.5 455v4M979.5 459v4M980.5 463v3M994.5 454v2M995.5 456v2M996.5 458v2M997.5 460v2M998.5 462v2M999.5 464v2M1000.5 466v2M1001.5 468v5M1002.5 473v7M1003.5 480v7M1004.5 487v8M1005.5 495v7M1006.5 502v7M1007.5 509v7M1008.5 516v6M1009.5 522v6M1010.5 528v5M1011.5 533v6M1012.5 539v5M1013.5 544v5M1014.5 549v6M1015.5 555v4M1016.5 559v3M1017.5 562v3M1018.5 565v3M1019.5 568v2M1020.5 570v3M1021.5 573v3M1022.5 576v2M1029.5 571v3M1030.5 574v6M1031.5 580v6M1032.5 586v6M1033.5 592v5M1034.5 597v6M1035.5 603v6M1036.5 605v7M1037.5 591v14M1038.5 577v14M1039.5 563v14M1040.5 549v14M1041.5 535v14M1042.5 521v14M1043.5 511v10M1044.5 504v7M1045.5 496v8M1046.5 489v7M1047.5 482v7M1048.5 474v8M1049.5 467v7M1050.5 463v4M850 420.5h3M846 421.5h4M845 422.5h1M844 423.5h1M842 424.5h2M841 425.5h1M840 426.5h1M707 432.5h1M708 433.5h1M709 434.5h1M872 434.5h2M710 435.5h1M870 435.5h2M711 436.5h1M868 436.5h2M712 437.5h1M867 437.5h1M972 437.5h1M866 438.5h1M971 438.5h1M865 439.5h1M970 439.5h1M864 440.5h1M863 441.5h1M826 442.5h3M862 442.5h1M968 442.5h1M829 443.5h3M861 443.5h1M953 443.5h10M967 443.5h1M963 444.5h4M3 445.5h1M116 445.5h6M5 448.5h1M283 450.5h1M7 451.5h1M282 451.5h1M8 452.5h1M280 452.5h2M279 453.5h1M22 454.5h2M94 454.5h1M278 454.5h1M10 455.5h2M21 455.5h1M95 455.5h1M993 455.5h1M12 456.5h2M20 456.5h1M96 456.5h1M992 456.5h1M14 457.5h2M18 457.5h2M92 457.5h1M97 457.5h1M991 457.5h1M16 458.5h2M98 458.5h1M990 458.5h1M99 459.5h1M989 459.5h1M100 460.5h1M105 460.5h3M988 460.5h1M101 461.5h4M987 461.5h1M89 462.5h1M985 462.5h2M983 463.5h2M981 464.5h2M672 472.5h1M673 473.5h1M675 476.5h1M903 476.5h1M676 477.5h1M904 477.5h2M906 478.5h2M908 479.5h1M732 480.5h1M731 481.5h1M365 482.5h1M254 484.5h2M729 484.5h1M253 485.5h1M252 486.5h1M250 487.5h2M457 489.5h1M138 492.5h3M565 492.5h1M141 493.5h3M453 496.5h1M452 497.5h1M451 498.5h1M450 499.5h1M936 500.5h1M448 502.5h1M447 503.5h1M934 503.5h1M933 504.5h1M222 506.5h2M224 507.5h1M931 507.5h1M225 508.5h1M187 509.5h3M226 509.5h2M190 510.5h4M194 511.5h1M195 512.5h1M197 515.5h1M198 516.5h1M199 517.5h1M240 517.5h1M629 519.5h6M480 520.5h1M237 522.5h1M478 523.5h1M477 524.5h1M475 527.5h1M474 528.5h1M608 572.5h1M1028 572.5h1M313 573.5h2M609 573.5h1M1027 573.5h1M315 574.5h2M1025 574.5h2M317 575.5h2M1024 575.5h1M319 576.5h1M611 576.5h1M1023 576.5h1M320 577.5h2M612 577.5h1M322 578.5h1M613 578.5h1M323 579.5h1M324 580.5h2M326 581.5h1M328 584.5h1M337 584.5h1M587 585.5h1M588 586.5h1M330 587.5h1M331 588.5h1M590 589.5h1M591 590.5h1M333 591.5h1M592 591.5h1M593 592.5h1M594 593.5h1M595 594.5h1M597 597.5h1M598 598.5h1M599 599.5h1M521 614.5h1M520 615.5h1M782 617.5h1M518 618.5h1M770 619.5h1M771 620.5h1M780 620.5h1M772 621.5h1M779 621.5h1M402 622.5h2M773 622.5h1M401 623.5h1M774 623.5h1M399 624.5h2M775 624.5h1M777 624.5h1M397 625.5h2M776 625.5h1" fill="none" stroke="#FFFFFF" stroke-width="1"/>
<rect x="3" y="608" width="1072" height="1" fill="#C0C0C0"/>

<g fill="none" stroke="#858585" stroke-width="1" shape-rendering="auto">
<rect x="5.5" y="3.5" width="11" height="10" rx="2.5"/>
<rect x="1060.5" y="24.5" width="11" height="10" rx="2.5"/>
</g>
<path d="M1047.5 24.5 L1052.5 29.5 L1047.5 34.500 L1042.5 29.5 Z" fill="none" stroke="#858585" stroke-width="1"/>
<rect x="12" y="5" width="3" height="7" fill="#9A9A9A"/>
<rect x="1067" y="26" width="3" height="7" fill="#9A9A9A"/>
<g shape-rendering="auto">
<circle cx="134" cy="29" r="6.1" fill="#7C7C7C"/><path d="M130.800 27.800 L134 30.800 L137.200 27.800" fill="none" stroke="#000" stroke-width="1.400"/>
<circle cx="9.500" cy="405" r="6.1" fill="#7C7C7C"/><path d="M6.300 403.800 L9.500 406.800 L12.700 403.800" fill="none" stroke="#000" stroke-width="1.400"/>
<path shape-rendering="crispEdges" d="M52 377.500 H65 M52.500 377.500 l4 -3 M52.500 377.500 l4 3.500" stroke="#C0C0C0" fill="none"/>
<path shape-rendering="crispEdges" d="M985.500 44.500 L973.500 42 M973.500 42 L977.500 39.500 M973.500 42 L976 45" stroke="#C0C0C0" fill="none"/>
</g>

</svg>
<div id="t"><span style="left:28px;top:2px;color:#C0C0C0;font-size:12px;">分时</span><span style="left:61px;top:2px;color:#C0C0C0;font-size:12px;">1分钟</span><span style="left:100px;top:2px;color:#C0C0C0;font-size:12px;">5分钟</span><span style="left:139px;top:2px;color:#C0C0C0;font-size:12px;">15分钟</span><span style="left:185px;top:2px;color:#C0C0C0;font-size:12px;">30分钟</span><span style="left:231px;top:2px;color:#C0C0C0;font-size:12px;">60分钟</span><span style="left:278px;top:2px;color:#54FFFF;font-size:12px;">日线</span><span style="left:311px;top:2px;color:#C0C0C0;font-size:12px;">周线</span><span style="left:345px;top:2px;color:#C0C0C0;font-size:12px;">月线</span><span style="left:378px;top:2px;color:#C0C0C0;font-size:12px;">多周期</span><span style="left:422px;top:2px;color:#C0C0C0;font-size:12px;">更多<i style="margin-left:3px;font-style:normal">&gt;</i></span><span style="left:816px;top:2px;color:#C0C0C0;font-size:12px;">复权</span><span style="left:850px;top:2px;color:#C0C0C0;font-size:12px;">叠加</span><span style="left:885px;top:2px;color:#C0C0C0;font-size:12px;">多股</span><span style="left:919px;top:2px;color:#C0C0C0;font-size:12px;">统计</span><span style="left:954px;top:2px;color:#C0C0C0;font-size:12px;">画线</span><span style="left:992px;top:2px;color:#C0C0C0;font-size:12px;">F10</span><span style="left:1024px;top:2px;color:#C0C0C0;font-size:12px;">标记</span><span style="left:1057px;top:2px;color:#C0C0C0;font-size:12px;">+自选</span><span style="left:1096px;top:2px;color:#C0C0C0;font-size:12px;">返回</span><span style="left:2px;top:22px;color:#C0C0C0;font-size:12px;">高乐股份(日线.前复权)</span><span style="left:18px;top:398px;color:#C0C0C0;font-size:12px;">股朋指标网</span><span style="left:83px;top:398px;color:#FFFFFF;font-size:12px;">J: 82.74</span><span style="left:131px;top:398px;color:#FFFF00;font-size:12px;">J1: 87.47</span><span style="left:186px;top:398px;color:#00FF00;font-size:12px;">压力: 95.28</span><span style="left:252px;top:398px;color:#FF0000;font-size:12px;">支撑: 73.81</span><span style="left:318px;top:398px;color:#C0C0C0;font-size:12px;">: 0.00</span><span style="left:1098px;top:56px;color:#FF3232;font-size:12px;">4.80</span><span style="left:1098px;top:94px;color:#FF3232;font-size:12px;">4.60</span><span style="left:1098px;top:131px;color:#FF3232;font-size:12px;">4.40</span><span style="left:1098px;top:168px;color:#FF3232;font-size:12px;">4.20</span><span style="left:1098px;top:205px;color:#FF3232;font-size:12px;">4.00</span><span style="left:1098px;top:243px;color:#FF3232;font-size:12px;">3.80</span><span style="left:1098px;top:280px;color:#FF3232;font-size:12px;">3.60</span><span style="left:1098px;top:317px;color:#FF3232;font-size:12px;">3.40</span><span style="left:1077px;top:357px;color:#D8D8D8;font-size:12px;">3.14</span><span style="left:1090px;top:426px;color:#FF3232;font-size:12px;">100.0</span><span style="left:1090px;top:461px;color:#FF3232;font-size:12px;">80.00</span><span style="left:1090px;top:496px;color:#FF3232;font-size:12px;">60.00</span><span style="left:1090px;top:531px;color:#FF3232;font-size:12px;">40.00</span><span style="left:1090px;top:567px;color:#FF3232;font-size:12px;">20.00</span><span style="left:4px;top:632px;color:#FF3232;font-size:12px;">2025年</span><span style="left:80px;top:632px;color:#FF3232;font-size:12px;">5</span><span style="left:214px;top:632px;color:#FF3232;font-size:12px;">6</span><span style="left:354px;top:632px;color:#FF3232;font-size:12px;">7</span><span style="left:516px;top:632px;color:#FF3232;font-size:12px;">8</span><span style="left:663px;top:632px;color:#FF3232;font-size:12px;">9</span><span style="left:818px;top:632px;color:#FF3232;font-size:12px;">10</span><span style="left:937px;top:632px;color:#FF3232;font-size:12px;">11</span><span style="left:836px;top:631px;width:77px;height:15px;line-height:16px;text-indent:1px;background:#000080;color:#fff;font-size:12px;">2025/10/14/二</span><span style="left:66px;top:372px;color:#C0C0C0;font-size:12px;">3.11</span><span style="left:988px;top:39px;color:#C0C0C0;font-size:12px;">4.92</span><span style="left:263px;top:382px;width:13px;height:13px;background:#A05000;color:#fff;font-size:12px;line-height:13px;text-align:center;">榜</span><span style="left:909px;top:382px;width:13px;height:13px;background:#103878;color:#fff;font-size:12px;line-height:13px;text-align:center;">财</span><span style="left:1036px;top:382px;width:13px;height:13px;background:#008080;color:#fff;font-size:12px;line-height:13px;text-align:center;">停</span><div style="position:absolute;left:971px;top:600px;width:159px;height:50px;background:#3b3636;"></div><span style="left:971px;top:604px;width:159px;text-align:center;color:#fff;font-size:18px;font-weight:bold;line-height:22px;font-family:'Liberation Sans','Noto Sans CJK SC',sans-serif;text-shadow:0 0 2px #222;">指标公式网</span><span style="left:972px;top:627px;width:159px;text-align:center;color:#fff;font-size:15px;line-height:18px;font-family:'DejaVu Sans',sans-serif;text-shadow:0 1px 1px #3a6fd8;">www.zbgs3.com</span></div>
</div></body></html>
